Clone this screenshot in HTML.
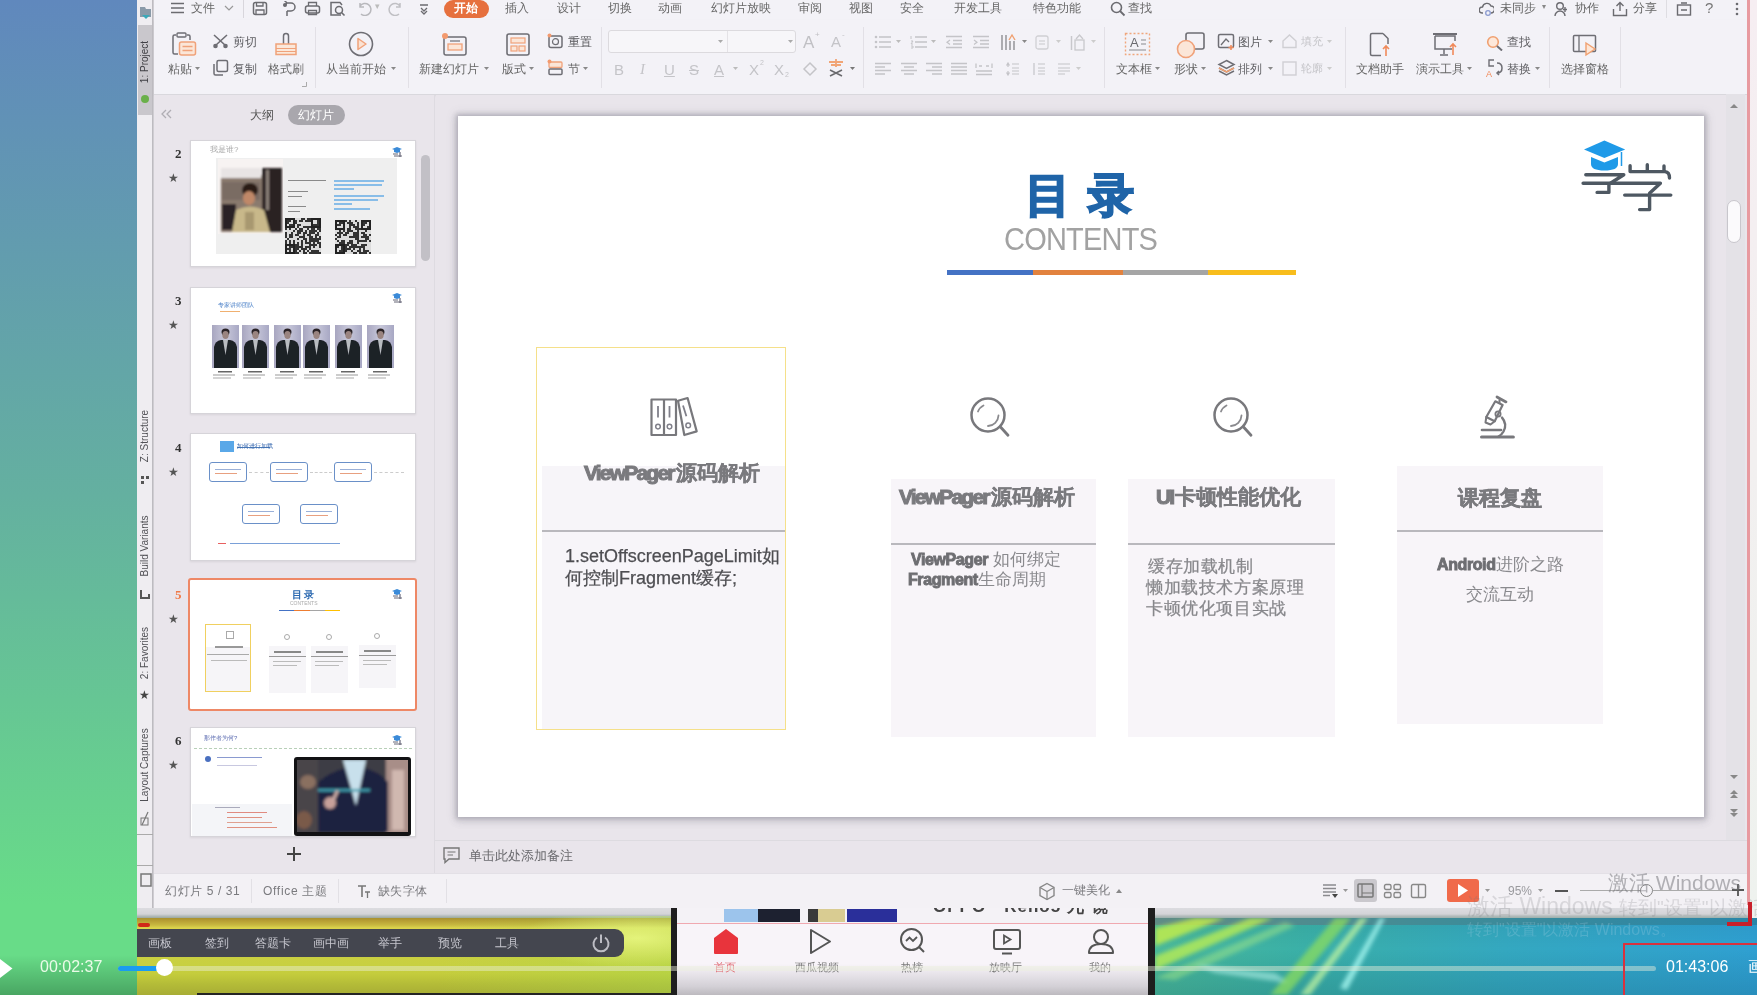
<!DOCTYPE html>
<html><head><meta charset="utf-8">
<style>
*{margin:0;padding:0;box-sizing:border-box}
html,body{width:1757px;height:995px;overflow:hidden;background:#68dc88;font-family:"Liberation Sans",sans-serif}
body{filter:blur(0.45px)}
.a{position:absolute}
#bg{left:0;top:0;width:1757px;height:995px;background:linear-gradient(#6088bd 0px,#64b0a0 495px,#68dc88 905px,#68dc88 995px)}
#as{left:137px;top:0;width:17px;height:908px;background:#eceaee;border-right:1px solid #cfcdd2}
#wps{left:154px;top:0;width:1594px;height:908px;background:#e9e5eb}
#tabs{left:0;top:0;width:1594px;height:20px;background:#f3f2f7}
#ribbon{left:0;top:20px;width:1594px;height:75px;background:#f3f2f7;border-bottom:1px solid #d9d8dd;box-shadow:0 1px 2px rgba(0,0,0,.06)}
#panel{left:0;top:95px;width:281px;height:778px;background:#e9e5eb;border-right:1px solid #dedbe1}
#main{left:282px;top:95px;width:1312px;height:778px;background:#e9e5eb}
#slide{left:458px;top:116px;width:1246px;height:701px;background:#fff;box-shadow:0 0 4px 2px rgba(80,80,95,.25),0 0 10px 3px rgba(80,80,95,.1),0 3px 8px 2px rgba(80,80,95,.1)}
#status{left:0;top:873px;width:1594px;height:35px;background:#f3f1f5;border-top:1px solid #e3e0e6}
#rline{left:1748px;top:0;width:2px;height:905px;background:#e88c90}
#vid{left:137px;top:908px;width:534px;height:87px;background:linear-gradient(90deg,#b9a622,#cdd236 40%,#d7e642 80%,#a5d23a)}
#phone{left:671px;top:908px;width:484px;height:87px;overflow:hidden;background:#f6f3f8;border-left:6px solid #1e1e1e;border-right:7px solid #1e1e1e}
#win7{left:1155px;top:908px;width:602px;height:87px;background:linear-gradient(90deg,#3fae8e,#39a8b8 50%,#2e9fd0)}
.t{position:absolute;white-space:nowrap;font-size:12px;color:#666;line-height:1}
</style></head><body>
<div id="bg" class="a"></div>
<div id="as" class="a"></div>
<div id="wps" class="a">
  <div id="tabs" class="a"></div>
  <div id="ribbon" class="a"></div>
  <div id="panel" class="a"></div>
  <div id="main" class="a"></div>
  <div id="status" class="a"></div>
</div>

<!-- tab row -->
<svg class="a" style="left:170px;top:2px" width="15" height="12" viewBox="0 0 15 12"><path d="M1 1.5H14M1 6H14M1 10.5H14" stroke="#6b6b70" stroke-width="1.5"/></svg>
<div class="t" style="left:191px;top:2px;font-size:12px;color:#666">文件</div>
<svg class="a" style="left:224px;top:4px" width="10" height="8" viewBox="0 0 10 8"><path d="M1 2L5 6L9 2" fill="none" stroke="#999" stroke-width="1.2"/></svg>
<div class="a" style="left:243px;top:0;width:1px;height:18px;background:#d8d6dc"></div>
<svg class="a" style="left:252px;top:1px" width="16" height="15" viewBox="0 0 16 15"><rect x="1.5" y="1.5" width="13" height="12" rx="2" fill="none" stroke="#6b6b70" stroke-width="1.5"/><path d="M4.5 1.5V5H11V1.5M4 13.5V9H12V13.5" fill="none" stroke="#6b6b70" stroke-width="1.3"/></svg>
<svg class="a" style="left:281px;top:1px" width="16" height="16" viewBox="0 0 16 16"><path d="M6 2H10A4 4 0 0 1 10 10H6M6 10V15M3 5L6 2L3 -1" fill="none" stroke="#6b6b70" stroke-width="1.5"/><circle cx="4" cy="4" r="2" fill="#6b6b70"/></svg>
<svg class="a" style="left:304px;top:1px" width="17" height="15" viewBox="0 0 17 15"><rect x="1.5" y="5" width="14" height="7" rx="2" fill="none" stroke="#6b6b70" stroke-width="1.5"/><path d="M4.5 5V1.5H12.5V5M4.5 9.5H12.5V13.5H4.5Z" fill="none" stroke="#6b6b70" stroke-width="1.3"/></svg>
<svg class="a" style="left:329px;top:1px" width="17" height="16" viewBox="0 0 17 16"><path d="M12 14H2V1.5H11L13 4" fill="none" stroke="#6b6b70" stroke-width="1.5"/><circle cx="10" cy="9" r="3.5" fill="none" stroke="#6b6b70" stroke-width="1.5"/><path d="M12.5 11.5L15.5 14.5" stroke="#6b6b70" stroke-width="1.6"/></svg>
<svg class="a" style="left:356px;top:2px" width="16" height="14" viewBox="0 0 16 14"><path d="M4 4A6 6 0 1 1 5 12M4 1V5H8" fill="none" stroke="#b8b8bc" stroke-width="1.5"/></svg>
<div class="t" style="left:375px;top:2px;font-size:9px;color:#bbb">▾</div>
<svg class="a" style="left:388px;top:2px" width="16" height="14" viewBox="0 0 16 14"><path d="M12 4A6 6 0 1 0 11 12M12 1V5H8" fill="none" stroke="#c0c0c4" stroke-width="1.5"/></svg>
<svg class="a" style="left:419px;top:3px" width="10" height="12" viewBox="0 0 10 12"><path d="M1 2H9M2 5L5 8L8 5M2 8L5 11L8 8" fill="none" stroke="#6b6b70" stroke-width="1.3"/></svg>
<div class="a" style="left:444px;top:0;width:45px;height:18px;border-radius:9px;background:#e6703e"></div>
<div class="t" style="left:454px;top:2px;font-size:12px;color:#fff;font-weight:bold">开始</div>
<div class="t" style="left:505px;top:2px">插入</div>
<div class="t" style="left:557px;top:2px">设计</div>
<div class="t" style="left:608px;top:2px">切换</div>
<div class="t" style="left:658px;top:2px">动画</div>
<div class="t" style="left:711px;top:2px">幻灯片放映</div>
<div class="t" style="left:798px;top:2px">审阅</div>
<div class="t" style="left:849px;top:2px">视图</div>
<div class="t" style="left:900px;top:2px">安全</div>
<div class="t" style="left:954px;top:2px">开发工具</div>
<div class="t" style="left:1033px;top:2px">特色功能</div>
<svg class="a" style="left:1110px;top:1px" width="16" height="16" viewBox="0 0 16 16"><circle cx="6.5" cy="6.5" r="5" fill="none" stroke="#6b6b70" stroke-width="1.6"/><path d="M10 10L14.5 14.5" stroke="#6b6b70" stroke-width="1.8"/></svg>
<div class="t" style="left:1128px;top:2px">查找</div>
<svg class="a" style="left:1479px;top:1px" width="15" height="16" viewBox="0 0 15 16"><path d="M4 12H3A3 3 0 0 1 3.5 6A4.5 4.5 0 0 1 12 5A3.5 3.5 0 0 1 12 12" fill="none" stroke="#6b6b70" stroke-width="1.4"/><circle cx="9" cy="12" r="2.3" fill="none" stroke="#8a9ad0" stroke-width="1.3"/></svg>
<div class="t" style="left:1500px;top:2px">未同步</div>
<div class="t" style="left:1542px;top:3px;font-size:8px;color:#888">▾</div>
<svg class="a" style="left:1554px;top:1px" width="15" height="16" viewBox="0 0 15 16"><circle cx="6" cy="5" r="3.3" fill="none" stroke="#6b6b70" stroke-width="1.4"/><path d="M1 15A5 5 0 0 1 11 15M11 6V11M9 8.5H13" fill="none" stroke="#6b6b70" stroke-width="1.4"/></svg>
<div class="t" style="left:1575px;top:2px">协作</div>
<svg class="a" style="left:1612px;top:1px" width="16" height="16" viewBox="0 0 16 16"><path d="M1.5 8V14.5H14.5V8M8 10V2M4.5 5L8 1.5L11.5 5" fill="none" stroke="#6b6b70" stroke-width="1.4"/></svg>
<div class="t" style="left:1633px;top:2px">分享</div>
<div class="a" style="left:1666px;top:0;width:1px;height:18px;background:#dedde2"></div>
<svg class="a" style="left:1676px;top:2px" width="16" height="14" viewBox="0 0 16 14"><rect x="1.5" y="3" width="13" height="10" fill="none" stroke="#6b6b70" stroke-width="1.4"/><path d="M5 1H11M5 8H11" stroke="#6b6b70" stroke-width="1.3"/></svg>
<div class="t" style="left:1705px;top:0;font-size:15px;color:#777">?</div>
<svg class="a" style="left:1735px;top:2px" width="4" height="14" viewBox="0 0 4 14"><circle cx="2" cy="2" r="1.3" fill="#6b6b70"/><circle cx="2" cy="7" r="1.3" fill="#6b6b70"/><circle cx="2" cy="12" r="1.3" fill="#6b6b70"/></svg>

<!-- ribbon -->
<svg class="a" style="left:874px;top:35px" width="18" height="14" viewBox="0 0 18 14"><circle cx="2" cy="2" r="1.3" fill="#c4c4c8"/><circle cx="2" cy="7" r="1.3" fill="#c4c4c8"/><circle cx="2" cy="12" r="1.3" fill="#c4c4c8"/><path d="M5 2H17M5 7H17M5 12H17" stroke="#c4c4c8" stroke-width="1.4"/></svg>
<svg class="a" style="left:910px;top:35px" width="18" height="14" viewBox="0 0 18 14"><path d="M1 1V4M1 6H3L1 9H3M1 11H3V13H1" fill="none" stroke="#c4c4c8" stroke-width="1"/><path d="M5 2H17M5 7H17M5 12H17" stroke="#c4c4c8" stroke-width="1.4"/></svg>
<svg class="a" style="left:945px;top:35px" width="18" height="14" viewBox="0 0 18 14"><path d="M1 1.5H17M8 5.5H17M8 9H17M1 12.5H17" stroke="#c4c4c8" stroke-width="1.4"/><path d="M5 5L2 7.2L5 9.5" fill="none" stroke="#c4c4c8" stroke-width="1.2"/></svg>
<svg class="a" style="left:972px;top:35px" width="18" height="14" viewBox="0 0 18 14"><path d="M1 1.5H17M8 5.5H17M8 9H17M1 12.5H17" stroke="#c4c4c8" stroke-width="1.4"/><path d="M2 5L5 7.2L2 9.5" fill="none" stroke="#c4c4c8" stroke-width="1.2"/></svg>
<svg class="a" style="left:874px;top:62px" width="18" height="14" viewBox="0 0 18 14"><path d="M1 1.5H17M1 5H11M1 8.5H17M1 12H11" stroke="#c4c4c8" stroke-width="1.4"/></svg>
<svg class="a" style="left:900px;top:62px" width="18" height="14" viewBox="0 0 18 14"><path d="M1 1.5H17M4 5H14M1 8.5H17M4 12H14" stroke="#c4c4c8" stroke-width="1.4"/></svg>
<svg class="a" style="left:925px;top:62px" width="18" height="14" viewBox="0 0 18 14"><path d="M1 1.5H17M7 5H17M1 8.5H17M7 12H17" stroke="#c4c4c8" stroke-width="1.4"/></svg>
<svg class="a" style="left:950px;top:62px" width="18" height="14" viewBox="0 0 18 14"><path d="M1 1.5H17M1 5H17M1 8.5H17M1 12H17" stroke="#c4c4c8" stroke-width="1.4"/></svg>
<svg class="a" style="left:975px;top:62px" width="18" height="14" viewBox="0 0 18 14"><path d="M1 1.5V6M17 1.5V6M4 4H7M11 4H14M1 9H17M1 12.5H17" stroke="#c4c4c8" stroke-width="1.3"/></svg>
<svg class="a" style="left:1006px;top:62px" width="14" height="14" viewBox="0 0 14 14"><path d="M2 1V5M0.5 3.5L2 1L3.5 3.5M2 9V13M0.5 10.5L2 13L3.5 10.5M6 2H13M6 6H13M6 9H13M6 12H13" fill="none" stroke="#c4c4c8" stroke-width="1.2"/></svg>
<svg class="a" style="left:1032px;top:62px" width="14" height="14" viewBox="0 0 14 14"><path d="M2 1V13M6 2H13M6 6H13M6 9H13M6 12H13" fill="none" stroke="#c4c4c8" stroke-width="1.2"/></svg>
<svg class="a" style="left:1057px;top:62px" width="14" height="14" viewBox="0 0 14 14"><path d="M1 2H13M1 6H13M1 9H13M1 12H8" fill="none" stroke="#c4c4c8" stroke-width="1.2"/></svg>
<svg class="a" style="left:171px;top:32px" width="27" height="24" viewBox="0 0 27 24"><path d="M5 3H3.5Q2 3 2 4.5V20.5Q2 22 3.5 22H7" fill="none" stroke="#6e6e74" stroke-width="1.5"/><path d="M16 3H17.5Q19 3 19 4.5V8" fill="none" stroke="#6e6e74" stroke-width="1.5"/><rect x="6" y="1" width="9" height="4" rx="1" fill="none" stroke="#6e6e74" stroke-width="1.4"/><rect x="8.5" y="10" width="16" height="13" rx="2" fill="#fbe6d8" stroke="#f0a27a" stroke-width="1.5"/><path d="M11.5 14.5H21.5M11.5 18.5H21.5" stroke="#f0a27a" stroke-width="1.3"/></svg>
<div class="t" style="left:168px;top:63px;font-size:12px;color:#666;">粘贴</div>
<svg class="a" style="left:195px;top:67px" width="5" height="4" viewBox="0 0 5 4"><path d="M0 0H5L2.5 3Z" fill="#888"/></svg>
<svg class="a" style="left:212px;top:34px" width="17" height="15" viewBox="0 0 17 15"><path d="M2 1L13 11M15 1L4 11" stroke="#6e6e74" stroke-width="1.6"/><circle cx="3.5" cy="12" r="2.3" fill="#6e6e74"/><circle cx="13.5" cy="12" r="2.3" fill="#6e6e74"/></svg>
<div class="t" style="left:233px;top:36px;font-size:12px;color:#5e5e62;">剪切</div>
<svg class="a" style="left:212px;top:59px" width="17" height="17" viewBox="0 0 17 17"><rect x="5" y="1.5" width="10.5" height="11" rx="1.5" fill="none" stroke="#6e6e74" stroke-width="1.5"/><path d="M2 5V14.5Q2 16 3.5 16H11" fill="none" stroke="#6e6e74" stroke-width="1.5"/></svg>
<div class="t" style="left:233px;top:63px;font-size:12px;color:#5e5e62;">复制</div>
<svg class="a" style="left:274px;top:32px" width="24" height="24" viewBox="0 0 24 24"><path d="M9.5 12V4Q9.5 1.5 12 1.5Q14.5 1.5 14.5 4V12" fill="none" stroke="#6e6e74" stroke-width="1.5"/><path d="M2 12H22V22.5H2Z" fill="#fbe8da" stroke="#f0a27a" stroke-width="1.5"/><path d="M2 16.5H22M2 19.5H22" stroke="#f0a27a" stroke-width="1.2"/></svg>
<div class="t" style="left:268px;top:63px;font-size:12px;color:#666;">格式刷</div>
<svg class="a" style="left:302px;top:82px" width="5" height="5" viewBox="0 0 5 5"><path d="M4.5 0V4.5H0" fill="none" stroke="#aaa" stroke-width="1"/></svg>
<div class="a" style="left:315px;top:27px;width:1px;height:61px;background:#e2e0e6"></div>
<svg class="a" style="left:348px;top:31px" width="26" height="26" viewBox="0 0 26 26"><circle cx="13" cy="13" r="11.5" fill="none" stroke="#6e6e74" stroke-width="1.6"/><path d="M10 7.5L18 13L10 18.5Z" fill="#fbe2d2" stroke="#f0a27a" stroke-width="1.5" stroke-linejoin="round"/></svg>
<div class="t" style="left:326px;top:63px;font-size:12px;color:#666;">从当前开始</div>
<svg class="a" style="left:391px;top:67px" width="5" height="4" viewBox="0 0 5 4"><path d="M0 0H5L2.5 3Z" fill="#888"/></svg>
<div class="a" style="left:408px;top:27px;width:1px;height:61px;background:#e2e0e6"></div>
<svg class="a" style="left:441px;top:32px" width="27" height="25" viewBox="0 0 27 25"><rect x="3" y="5" width="22" height="18" rx="2" fill="none" stroke="#6e6e74" stroke-width="1.5"/><rect x="7" y="12" width="14" height="6" fill="#fbe6d8" stroke="#f0a27a" stroke-width="1.3"/><path d="M9 9H19" stroke="#6e6e74" stroke-width="1.2"/><circle cx="4" cy="4" r="3" fill="#f39a6e"/></svg>
<div class="t" style="left:419px;top:63px;font-size:12px;color:#666;">新建幻灯片</div>
<svg class="a" style="left:484px;top:67px" width="5" height="4" viewBox="0 0 5 4"><path d="M0 0H5L2.5 3Z" fill="#888"/></svg>
<svg class="a" style="left:505px;top:32px" width="26" height="25" viewBox="0 0 26 25"><rect x="2" y="2" width="22" height="21" rx="2" fill="none" stroke="#6e6e74" stroke-width="1.6"/><rect x="6" y="6" width="14" height="5" fill="#fbe6d8" stroke="#f0a27a" stroke-width="1.2"/><rect x="6" y="14" width="6" height="5" fill="#fbe6d8" stroke="#f0a27a" stroke-width="1.2"/><rect x="14" y="14" width="6" height="5" fill="#fbe6d8" stroke="#f0a27a" stroke-width="1.2"/></svg>
<div class="t" style="left:502px;top:63px;font-size:12px;color:#666;">版式</div>
<svg class="a" style="left:529px;top:67px" width="5" height="4" viewBox="0 0 5 4"><path d="M0 0H5L2.5 3Z" fill="#888"/></svg>
<svg class="a" style="left:547px;top:33px" width="17" height="16" viewBox="0 0 17 16"><rect x="2" y="3" width="13" height="11.5" rx="2" fill="none" stroke="#6e6e74" stroke-width="1.5"/><circle cx="8.5" cy="8.7" r="3" fill="none" stroke="#6e6e74" stroke-width="1.2"/><circle cx="2.5" cy="2.5" r="2" fill="#f39a6e"/></svg>
<div class="t" style="left:568px;top:36px;font-size:12px;color:#5a5a5e;">重置</div>
<svg class="a" style="left:547px;top:59px" width="17" height="17" viewBox="0 0 17 17"><rect x="2" y="3" width="13" height="5.5" rx="1" fill="#fbe6d8" stroke="#f0a27a" stroke-width="1.3"/><rect x="2" y="10" width="13" height="5.5" rx="1" fill="none" stroke="#6e6e74" stroke-width="1.5"/><circle cx="2.5" cy="2.5" r="2" fill="#f39a6e"/></svg>
<div class="t" style="left:568px;top:63px;font-size:12px;color:#666;">节</div>
<svg class="a" style="left:583px;top:67px" width="5" height="4" viewBox="0 0 5 4"><path d="M0 0H5L2.5 3Z" fill="#888"/></svg>
<div class="a" style="left:601px;top:27px;width:1px;height:61px;background:#e2e0e6"></div>
<div class="a" style="left:608px;top:30px;width:188px;height:23px;border:1px solid #dcdade;border-radius:3px;background:#f7f6f9"></div>
<div class="a" style="left:727px;top:31px;width:1px;height:21px;background:#e4e2e6"></div>
<svg class="a" style="left:718px;top:40px" width="5" height="4" viewBox="0 0 5 4"><path d="M0 0H5L2.5 3Z" fill="#aaa"/></svg>
<svg class="a" style="left:788px;top:40px" width="5" height="4" viewBox="0 0 5 4"><path d="M0 0H5L2.5 3Z" fill="#aaa"/></svg>
<div class="t" style="left:803px;top:34px;font-size:17px;color:#c0c0c4">A</div><div class="t" style="left:815px;top:31px;font-size:8px;color:#c0c0c4">+</div>
<div class="t" style="left:831px;top:34px;font-size:15px;color:#c4c4c8">A</div><div class="t" style="left:842px;top:31px;font-size:8px;color:#c4c4c8">-</div>
<div class="t" style="left:614px;top:62px;font-size:15px;color:#c4c4c8">B</div>
<div class="t" style="left:640px;top:62px;font-size:15px;color:#c4c4c8;font-style:italic;font-family:'Liberation Serif',serif">I</div>
<div class="t" style="left:664px;top:62px;font-size:15px;color:#c4c4c8;text-decoration:underline">U</div>
<div class="t" style="left:689px;top:62px;font-size:15px;color:#c4c4c8;text-decoration:line-through">S</div>
<div class="t" style="left:714px;top:62px;font-size:15px;color:#c4c4c8;text-decoration:underline">A</div>
<svg class="a" style="left:733px;top:67px" width="5" height="4" viewBox="0 0 5 4"><path d="M0 0H5L2.5 3Z" fill="#bbb"/></svg>
<div class="t" style="left:749px;top:62px;font-size:15px;color:#c4c4c8">X</div><div class="t" style="left:760px;top:59px;font-size:7px;color:#c4c4c8">2</div>
<div class="t" style="left:774px;top:62px;font-size:15px;color:#c4c4c8">X</div><div class="t" style="left:785px;top:71px;font-size:7px;color:#c4c4c8">2</div>
<svg class="a" style="left:802px;top:60px" width="17" height="17" viewBox="0 0 17 17"><path d="M2 9L8 3L14 9L8 15Z" fill="none" stroke="#c4c4c8" stroke-width="1.5"/></svg>
<svg class="a" style="left:826px;top:58px" width="20" height="20" viewBox="0 0 20 20"><path d="M3 4H17M10 1V9M5 7L15 7" stroke="#f1a576" stroke-width="1.8"/><path d="M4 12L16 18M16 12L4 18" stroke="#6a6a6e" stroke-width="1.6"/></svg>
<svg class="a" style="left:850px;top:67px" width="5" height="4" viewBox="0 0 5 4"><path d="M0 0H5L2.5 3Z" fill="#777"/></svg>
<div class="a" style="left:863px;top:27px;width:1px;height:61px;background:#e2e0e6"></div>
<svg class="a" style="left:896px;top:40px" width="5" height="4" viewBox="0 0 5 4"><path d="M0 0H5L2.5 3Z" fill="#bbb"/></svg>
<svg class="a" style="left:931px;top:40px" width="5" height="4" viewBox="0 0 5 4"><path d="M0 0H5L2.5 3Z" fill="#bbb"/></svg>
<svg class="a" style="left:1000px;top:33px" width="18" height="18" viewBox="0 0 18 18"><path d="M2 2V17M6 2V17M10 8V17M14 8V17" stroke="#9a9a9e" stroke-width="1.6"/><path d="M9 7L12 2L15 7" fill="none" stroke="#f0a070" stroke-width="1.4"/></svg>
<svg class="a" style="left:1022px;top:40px" width="5" height="4" viewBox="0 0 5 4"><path d="M0 0H5L2.5 3Z" fill="#888"/></svg>
<svg class="a" style="left:1035px;top:35px" width="14" height="15" viewBox="0 0 14 15"><rect x="1" y="1" width="12" height="13" rx="2" fill="none" stroke="#d0d0d4" stroke-width="1.3"/><path d="M4 6H10M4 9H10" stroke="#c8c8cc" stroke-width="1.2"/></svg>
<svg class="a" style="left:1070px;top:34px" width="16" height="17" viewBox="0 0 16 17"><path d="M1.5 2V16" stroke="#c8c8cc" stroke-width="1.5"/><rect x="5" y="6" width="9" height="10" fill="none" stroke="#c8c8cc" stroke-width="1.3"/><path d="M6 5L9.5 1L13 5" fill="none" stroke="#c8c8cc" stroke-width="1.3"/></svg>
<svg class="a" style="left:1056px;top:40px" width="5" height="4" viewBox="0 0 5 4"><path d="M0 0H5L2.5 3Z" fill="#ccc"/></svg>
<svg class="a" style="left:1091px;top:40px" width="5" height="4" viewBox="0 0 5 4"><path d="M0 0H5L2.5 3Z" fill="#ccc"/></svg>
<svg class="a" style="left:1076px;top:67px" width="5" height="4" viewBox="0 0 5 4"><path d="M0 0H5L2.5 3Z" fill="#ccc"/></svg>
<div class="a" style="left:1104px;top:27px;width:1px;height:61px;background:#e2e0e6"></div>
<svg class="a" style="left:1124px;top:32px" width="27" height="24" viewBox="0 0 27 24"><rect x="1.5" y="1.5" width="24" height="21" fill="none" stroke="#f0a67c" stroke-width="1.4" stroke-dasharray="2 2"/><text x="6" y="15" font-size="13" font-family="Liberation Sans" fill="#6a6a6e">A</text><path d="M5 18H22M17 8H22M17 12H22" stroke="#8a8a8e" stroke-width="1.2"/></svg>
<div class="t" style="left:1116px;top:63px;font-size:12px;color:#666;">文本框</div>
<svg class="a" style="left:1155px;top:67px" width="5" height="4" viewBox="0 0 5 4"><path d="M0 0H5L2.5 3Z" fill="#888"/></svg>
<svg class="a" style="left:1176px;top:31px" width="30" height="28" viewBox="0 0 30 28"><rect x="10" y="2" width="18" height="16" rx="2" fill="none" stroke="#6e6e74" stroke-width="1.6"/><circle cx="10" cy="18" r="8.5" fill="#fbe6d8" stroke="#f0a27a" stroke-width="1.6"/></svg>
<div class="t" style="left:1174px;top:63px;font-size:12px;color:#666;">形状</div>
<svg class="a" style="left:1201px;top:67px" width="5" height="4" viewBox="0 0 5 4"><path d="M0 0H5L2.5 3Z" fill="#888"/></svg>
<svg class="a" style="left:1217px;top:33px" width="19" height="17" viewBox="0 0 19 17"><rect x="1.5" y="1.5" width="15" height="13" rx="1.5" fill="none" stroke="#6e6e74" stroke-width="1.5"/><path d="M4 12L9 6L12 9" fill="none" stroke="#6e6e74" stroke-width="1.3"/><path d="M14 12V17M11.5 14.5H16.5" stroke="#f08a5a" stroke-width="1.5"/></svg>
<div class="t" style="left:1238px;top:36px;font-size:12px;color:#5e5e62;">图片</div>
<svg class="a" style="left:1268px;top:40px" width="5" height="4" viewBox="0 0 5 4"><path d="M0 0H5L2.5 3Z" fill="#888"/></svg>
<svg class="a" style="left:1217px;top:59px" width="19" height="17" viewBox="0 0 19 17"><path d="M9.5 1.5L17 5.5L9.5 9.5L2 5.5Z" fill="none" stroke="#6e6e74" stroke-width="1.5"/><path d="M2 9L9.5 13L17 9M2 12L9.5 16L17 12" fill="none" stroke="#6e6e74" stroke-width="1.5"/><path d="M2 9L9.5 13L17 9" fill="none" stroke="#f0a070" stroke-width="1.5"/></svg>
<div class="t" style="left:1238px;top:63px;font-size:12px;color:#5e5e62;">排列</div>
<svg class="a" style="left:1268px;top:67px" width="5" height="4" viewBox="0 0 5 4"><path d="M0 0H5L2.5 3Z" fill="#888"/></svg>
<svg class="a" style="left:1281px;top:33px" width="17" height="17" viewBox="0 0 17 17"><path d="M2 8L8.5 2L15 8V14.5H2Z" fill="none" stroke="#cfcfd3" stroke-width="1.4"/></svg>
<svg class="a" style="left:1281px;top:60px" width="17" height="17" viewBox="0 0 17 17"><rect x="2" y="2" width="13" height="13" fill="none" stroke="#cfcfd3" stroke-width="1.4"/></svg>
<div class="t" style="left:1301px;top:36px;font-size:11px;color:#c4c4c8;">填充</div>
<svg class="a" style="left:1327px;top:40px" width="5" height="4" viewBox="0 0 5 4"><path d="M0 0H5L2.5 3Z" fill="#ccc"/></svg>
<div class="t" style="left:1301px;top:63px;font-size:11px;color:#c4c4c8;">轮廓</div>
<svg class="a" style="left:1327px;top:67px" width="5" height="4" viewBox="0 0 5 4"><path d="M0 0H5L2.5 3Z" fill="#ccc"/></svg>
<div class="a" style="left:1345px;top:27px;width:1px;height:61px;background:#e2e0e6"></div>
<svg class="a" style="left:1369px;top:32px" width="24" height="25" viewBox="0 0 24 25"><path d="M14 1.5H3Q1.5 1.5 1.5 3V22Q1.5 23.5 3 23.5H12M14 1.5L19 6.5V12" fill="none" stroke="#6e6e74" stroke-width="1.5"/><path d="M17 24V14M14 17L17 14L20 17" fill="none" stroke="#f08a5a" stroke-width="1.6"/></svg>
<div class="t" style="left:1356px;top:63px;font-size:12px;color:#666;">文档助手</div>
<svg class="a" style="left:1432px;top:32px" width="26" height="25" viewBox="0 0 26 25"><path d="M1 2H25" stroke="#6e6e74" stroke-width="2"/><path d="M3 4V17H20" fill="none" stroke="#6e6e74" stroke-width="1.5"/><path d="M12 17V22M8 23H16" stroke="#6e6e74" stroke-width="1.5"/><path d="M3 4H23V9" fill="none" stroke="#6e6e74" stroke-width="1.5"/><path d="M21 23V12M18 15L21 12L24 15" fill="none" stroke="#f08a5a" stroke-width="1.6"/></svg>
<div class="t" style="left:1416px;top:63px;font-size:12px;color:#666;">演示工具</div>
<svg class="a" style="left:1467px;top:67px" width="5" height="4" viewBox="0 0 5 4"><path d="M0 0H5L2.5 3Z" fill="#888"/></svg>
<svg class="a" style="left:1486px;top:35px" width="18" height="16" viewBox="0 0 18 16"><circle cx="7" cy="7" r="5.3" fill="#fde8da" stroke="#f0a070" stroke-width="1.6"/><path d="M11 11L16 15.5" stroke="#6e6e74" stroke-width="2"/></svg>
<div class="t" style="left:1507px;top:36px;font-size:12px;color:#5e5e62;">查找</div>
<svg class="a" style="left:1486px;top:59px" width="18" height="19" viewBox="0 0 18 19"><path d="M8 1H3V7H8" fill="none" stroke="#6e6e74" stroke-width="1.4"/><path d="M11 4Q16 4 16 9Q16 14 11 14M13 12L11 14L13 16" fill="none" stroke="#6e6e74" stroke-width="1.5"/><text x="0" y="18" font-size="9" fill="#f08a5a" font-family="Liberation Sans">A</text></svg>
<div class="t" style="left:1507px;top:63px;font-size:12px;color:#5e5e62;">替换</div>
<svg class="a" style="left:1535px;top:67px" width="5" height="4" viewBox="0 0 5 4"><path d="M0 0H5L2.5 3Z" fill="#888"/></svg>
<div class="a" style="left:1549px;top:27px;width:1px;height:61px;background:#e2e0e6"></div>
<svg class="a" style="left:1572px;top:34px" width="26" height="23" viewBox="0 0 26 23"><rect x="1.5" y="1.5" width="22" height="16" rx="1" fill="none" stroke="#6e6e74" stroke-width="1.5"/><path d="M7 1.5V17.5" stroke="#6e6e74" stroke-width="1.3"/><path d="M14 9L23 15L14 21Z" fill="#fde6d6" stroke="#f0a070" stroke-width="1.4"/></svg>
<div class="t" style="left:1561px;top:63px;font-size:12px;color:#666;">选择窗格</div>
<div class="a" style="left:1620px;top:27px;width:1px;height:61px;background:#e2e0e6"></div>

<!-- AS strip -->
<div class="a" style="left:137px;top:0;width:16px;height:908px;background:#efedf1;border-right:1px solid #bdbbc0"></div>
<div class="a" style="left:138px;top:25px;width:14px;height:90px;background:#c9c7cc"></div>
<svg class="a" style="left:139px;top:5px" width="13" height="16" viewBox="0 0 13 16"><path d="M1 2H6L7 4H12V12H1Z" fill="#8a9aa8"/><path d="M3 10L7 14L11 10Z" fill="#3aa8b8"/></svg>
<div class="a" style="left:141px;top:95px;width:8px;height:8px;border-radius:50%;background:#6ab04a"></div>
<div class="a" style="left:145px;top:62px;width:0;height:0"><div class="t" style="left:0;top:0;font-size:10px;color:#404045;transform:translate(-50%,-50%) rotate(-90deg)">1: Project</div></div>
<div class="a" style="left:145px;top:436px;width:0;height:0"><div class="t" style="left:0;top:0;font-size:10px;color:#505055;transform:translate(-50%,-50%) rotate(-90deg)">Z: Structure</div></div>
<svg class="a" style="left:140px;top:475px" width="10" height="10" viewBox="0 0 10 10"><rect x="1" y="1" width="3" height="3" fill="#555"/><rect x="6" y="1" width="3" height="3" fill="#555"/><rect x="1" y="6" width="3" height="3" fill="#555"/></svg>
<div class="a" style="left:145px;top:546px;width:0;height:0"><div class="t" style="left:0;top:0;font-size:10px;color:#505055;transform:translate(-50%,-50%) rotate(-90deg)">Build Variants</div></div>
<svg class="a" style="left:140px;top:589px" width="10" height="10" viewBox="0 0 10 10"><path d="M1 1V9H9V5" fill="none" stroke="#555" stroke-width="2"/></svg>
<div class="a" style="left:145px;top:653px;width:0;height:0"><div class="t" style="left:0;top:0;font-size:10px;color:#505055;transform:translate(-50%,-50%) rotate(-90deg)">2: Favorites</div></div>
<div class="t" style="left:139px;top:689px;font-size:12px;color:#444">★</div>
<div class="a" style="left:145px;top:765px;width:0;height:0"><div class="t" style="left:0;top:0;font-size:10px;color:#505055;transform:translate(-50%,-50%) rotate(-90deg)">Layout Captures</div></div>
<svg class="a" style="left:140px;top:810px" width="10" height="16" viewBox="0 0 10 16"><path d="M2 15L8 2" stroke="#777" stroke-width="1.2"/><rect x="1" y="8" width="7" height="7" fill="none" stroke="#777" stroke-width="1"/></svg>
<div class="a" style="left:137px;top:834px;width:16px;height:1px;background:#aaa"></div>
<div class="a" style="left:137px;top:865px;width:16px;height:1px;background:#aaa"></div>
<svg class="a" style="left:140px;top:872px" width="12" height="16" viewBox="0 0 12 16"><rect x="1" y="2" width="10" height="12" fill="none" stroke="#777" stroke-width="1.5"/></svg>
<!-- panel -->
<svg class="a" style="left:161px;top:109px" width="11" height="10" viewBox="0 0 11 10"><path d="M5 1L1 5L5 9M10 1L6 5L10 9" fill="none" stroke="#b0aeb4" stroke-width="1.3"/></svg>
<div class="t" style="left:250px;top:109px;color:#555">大纲</div>
<div class="a" style="left:288px;top:105px;width:57px;height:20px;border-radius:10px;background:#a9a7ad"></div>
<div class="t" style="left:298px;top:109px;color:#fff">幻灯片</div>
<div class="a" style="left:421px;top:155px;width:9px;height:106px;border-radius:5px;background:#c2c0c6"></div>
<div class="t" style="left:175px;top:147px;font-size:13px;font-weight:bold;color:#333;font-family:'Liberation Serif',serif">2</div>
<div class="t" style="left:168px;top:172px;font-size:12px;color:#555">★</div>
<div class="a" style="left:190px;top:140px;width:226px;height:127px;background:#fff;border:1px solid #d6d4d9;box-shadow:0 1px 2px rgba(0,0,0,.08)"></div>
<div class="a" style="left:216px;top:158px;width:181px;height:96px;background:#efefef"></div>
<div class="t" style="left:210px;top:146px;font-size:8px;color:#aaa">我是谁?</div>
<svg class="a" style="left:218px;top:159px" width="65" height="75" viewBox="218 159 65 75"><defs><filter id="pb"><feGaussianBlur stdDeviation="1.2"/></filter></defs>
<rect x="218" y="159" width="65" height="75" fill="#f7f3f2"/>
<g filter="url(#pb)">
<rect x="221" y="175" width="61" height="57" fill="#8a7a6e"/>
<rect x="221" y="168" width="40" height="10" fill="#e8e4e4"/>
<rect x="262" y="168" width="20" height="64" fill="#2a2220"/>
<rect x="266" y="170" width="3" height="40" fill="#8a8078"/>
<rect x="222" y="204" width="14" height="26" fill="#2a2428"/>
<rect x="222" y="182" width="38" height="18" fill="#7a6c64"/>
<ellipse cx="250" cy="190" rx="8" ry="7" fill="#2a1e18"/>
<ellipse cx="249" cy="198" rx="6" ry="7" fill="#c08868"/>
<path d="M232 232L236 210Q250 203 264 210L270 232Z" fill="#c8b88a"/>
<rect x="245" y="212" width="9" height="18" fill="#a89870"/>
</g></svg>
<div class="a" style="left:288px;top:180px;width:38px;height:1px;background:#8a8a8a"></div>
<div class="a" style="left:288px;top:191px;width:20px;height:1px;background:#8a8a8a"></div>
<div class="a" style="left:288px;top:196px;width:14px;height:1px;background:#8a8a8a"></div>
<div class="a" style="left:288px;top:206px;width:18px;height:1px;background:#8a8a8a"></div>
<div class="a" style="left:288px;top:211px;width:12px;height:1px;background:#8a8a8a"></div>
<div class="a" style="left:334px;top:180px;width:50px;height:1.5px;background:#88bde8"></div>
<div class="a" style="left:334px;top:184px;width:48px;height:1.5px;background:#88bde8"></div>
<div class="a" style="left:334px;top:188px;width:20px;height:1.5px;background:#88bde8"></div>
<div class="a" style="left:334px;top:195px;width:50px;height:1.5px;background:#88bde8"></div>
<div class="a" style="left:334px;top:199px;width:44px;height:1.5px;background:#88bde8"></div>
<div class="a" style="left:334px;top:203px;width:18px;height:1.5px;background:#88bde8"></div>
<div class="a" style="left:334px;top:208px;width:36px;height:1.5px;background:#88bde8"></div>
<svg class="a" style="left:285px;top:218px" width="36" height="36" viewBox="0 0 36 36"><rect width="36" height="36" fill="#dcdcdc"/><rect x="0" y="0" width="2" height="2" fill="#333"/><rect x="0" y="2" width="2" height="2" fill="#333"/><rect x="0" y="4" width="2" height="2" fill="#333"/><rect x="0" y="6" width="2" height="2" fill="#333"/><rect x="0" y="10" width="2" height="2" fill="#333"/><rect x="0" y="14" width="2" height="2" fill="#333"/><rect x="0" y="16" width="2" height="2" fill="#333"/><rect x="0" y="18" width="2" height="2" fill="#333"/><rect x="0" y="22" width="2" height="2" fill="#333"/><rect x="0" y="24" width="2" height="2" fill="#333"/><rect x="0" y="26" width="2" height="2" fill="#333"/><rect x="0" y="28" width="2" height="2" fill="#333"/><rect x="0" y="30" width="2" height="2" fill="#333"/><rect x="0" y="32" width="2" height="2" fill="#333"/><rect x="0" y="34" width="2" height="2" fill="#333"/><rect x="2" y="0" width="2" height="2" fill="#333"/><rect x="2" y="2" width="2" height="2" fill="#333"/><rect x="2" y="4" width="2" height="2" fill="#333"/><rect x="2" y="8" width="2" height="2" fill="#333"/><rect x="2" y="20" width="2" height="2" fill="#333"/><rect x="2" y="26" width="2" height="2" fill="#333"/><rect x="2" y="30" width="2" height="2" fill="#333"/><rect x="4" y="0" width="2" height="2" fill="#333"/><rect x="4" y="2" width="2" height="2" fill="#333"/><rect x="4" y="6" width="2" height="2" fill="#333"/><rect x="4" y="10" width="2" height="2" fill="#333"/><rect x="4" y="16" width="2" height="2" fill="#333"/><rect x="4" y="18" width="2" height="2" fill="#333"/><rect x="4" y="22" width="2" height="2" fill="#333"/><rect x="4" y="24" width="2" height="2" fill="#333"/><rect x="4" y="26" width="2" height="2" fill="#333"/><rect x="4" y="28" width="2" height="2" fill="#333"/><rect x="4" y="30" width="2" height="2" fill="#333"/><rect x="4" y="32" width="2" height="2" fill="#333"/><rect x="4" y="34" width="2" height="2" fill="#333"/><rect x="6" y="0" width="2" height="2" fill="#333"/><rect x="6" y="6" width="2" height="2" fill="#333"/><rect x="6" y="8" width="2" height="2" fill="#333"/><rect x="6" y="14" width="2" height="2" fill="#333"/><rect x="6" y="16" width="2" height="2" fill="#333"/><rect x="6" y="18" width="2" height="2" fill="#333"/><rect x="6" y="28" width="2" height="2" fill="#333"/><rect x="6" y="34" width="2" height="2" fill="#333"/><rect x="8" y="2" width="2" height="2" fill="#333"/><rect x="8" y="4" width="2" height="2" fill="#333"/><rect x="8" y="12" width="2" height="2" fill="#333"/><rect x="8" y="22" width="2" height="2" fill="#333"/><rect x="8" y="24" width="2" height="2" fill="#333"/><rect x="8" y="30" width="2" height="2" fill="#333"/><rect x="8" y="32" width="2" height="2" fill="#333"/><rect x="10" y="2" width="2" height="2" fill="#333"/><rect x="10" y="4" width="2" height="2" fill="#333"/><rect x="10" y="10" width="2" height="2" fill="#333"/><rect x="10" y="16" width="2" height="2" fill="#333"/><rect x="10" y="26" width="2" height="2" fill="#333"/><rect x="10" y="28" width="2" height="2" fill="#333"/><rect x="10" y="30" width="2" height="2" fill="#333"/><rect x="10" y="32" width="2" height="2" fill="#333"/><rect x="10" y="34" width="2" height="2" fill="#333"/><rect x="12" y="6" width="2" height="2" fill="#333"/><rect x="12" y="8" width="2" height="2" fill="#333"/><rect x="12" y="12" width="2" height="2" fill="#333"/><rect x="12" y="14" width="2" height="2" fill="#333"/><rect x="12" y="16" width="2" height="2" fill="#333"/><rect x="12" y="20" width="2" height="2" fill="#333"/><rect x="12" y="24" width="2" height="2" fill="#333"/><rect x="12" y="26" width="2" height="2" fill="#333"/><rect x="12" y="28" width="2" height="2" fill="#333"/><rect x="12" y="30" width="2" height="2" fill="#333"/><rect x="12" y="34" width="2" height="2" fill="#333"/><rect x="14" y="2" width="2" height="2" fill="#333"/><rect x="14" y="6" width="2" height="2" fill="#333"/><rect x="14" y="10" width="2" height="2" fill="#333"/><rect x="14" y="12" width="2" height="2" fill="#333"/><rect x="14" y="14" width="2" height="2" fill="#333"/><rect x="14" y="18" width="2" height="2" fill="#333"/><rect x="14" y="28" width="2" height="2" fill="#333"/><rect x="14" y="32" width="2" height="2" fill="#333"/><rect x="16" y="0" width="2" height="2" fill="#333"/><rect x="16" y="2" width="2" height="2" fill="#333"/><rect x="16" y="10" width="2" height="2" fill="#333"/><rect x="16" y="12" width="2" height="2" fill="#333"/><rect x="16" y="18" width="2" height="2" fill="#333"/><rect x="16" y="22" width="2" height="2" fill="#333"/><rect x="16" y="24" width="2" height="2" fill="#333"/><rect x="16" y="26" width="2" height="2" fill="#333"/><rect x="16" y="28" width="2" height="2" fill="#333"/><rect x="16" y="30" width="2" height="2" fill="#333"/><rect x="18" y="0" width="2" height="2" fill="#333"/><rect x="18" y="8" width="2" height="2" fill="#333"/><rect x="18" y="14" width="2" height="2" fill="#333"/><rect x="18" y="16" width="2" height="2" fill="#333"/><rect x="18" y="18" width="2" height="2" fill="#333"/><rect x="18" y="20" width="2" height="2" fill="#333"/><rect x="18" y="30" width="2" height="2" fill="#333"/><rect x="18" y="32" width="2" height="2" fill="#333"/><rect x="18" y="34" width="2" height="2" fill="#333"/><rect x="20" y="2" width="2" height="2" fill="#333"/><rect x="20" y="8" width="2" height="2" fill="#333"/><rect x="20" y="12" width="2" height="2" fill="#333"/><rect x="20" y="14" width="2" height="2" fill="#333"/><rect x="20" y="20" width="2" height="2" fill="#333"/><rect x="20" y="22" width="2" height="2" fill="#333"/><rect x="20" y="24" width="2" height="2" fill="#333"/><rect x="20" y="28" width="2" height="2" fill="#333"/><rect x="20" y="30" width="2" height="2" fill="#333"/><rect x="20" y="34" width="2" height="2" fill="#333"/><rect x="22" y="0" width="2" height="2" fill="#333"/><rect x="22" y="2" width="2" height="2" fill="#333"/><rect x="22" y="8" width="2" height="2" fill="#333"/><rect x="22" y="10" width="2" height="2" fill="#333"/><rect x="22" y="16" width="2" height="2" fill="#333"/><rect x="22" y="24" width="2" height="2" fill="#333"/><rect x="22" y="28" width="2" height="2" fill="#333"/><rect x="22" y="32" width="2" height="2" fill="#333"/><rect x="24" y="0" width="2" height="2" fill="#333"/><rect x="24" y="2" width="2" height="2" fill="#333"/><rect x="24" y="8" width="2" height="2" fill="#333"/><rect x="24" y="12" width="2" height="2" fill="#333"/><rect x="24" y="14" width="2" height="2" fill="#333"/><rect x="24" y="16" width="2" height="2" fill="#333"/><rect x="24" y="18" width="2" height="2" fill="#333"/><rect x="24" y="20" width="2" height="2" fill="#333"/><rect x="24" y="22" width="2" height="2" fill="#333"/><rect x="24" y="24" width="2" height="2" fill="#333"/><rect x="24" y="26" width="2" height="2" fill="#333"/><rect x="24" y="28" width="2" height="2" fill="#333"/><rect x="24" y="30" width="2" height="2" fill="#333"/><rect x="24" y="34" width="2" height="2" fill="#333"/><rect x="26" y="0" width="2" height="2" fill="#333"/><rect x="26" y="2" width="2" height="2" fill="#333"/><rect x="26" y="6" width="2" height="2" fill="#333"/><rect x="26" y="8" width="2" height="2" fill="#333"/><rect x="26" y="10" width="2" height="2" fill="#333"/><rect x="26" y="12" width="2" height="2" fill="#333"/><rect x="26" y="14" width="2" height="2" fill="#333"/><rect x="26" y="18" width="2" height="2" fill="#333"/><rect x="26" y="20" width="2" height="2" fill="#333"/><rect x="26" y="22" width="2" height="2" fill="#333"/><rect x="26" y="26" width="2" height="2" fill="#333"/><rect x="26" y="32" width="2" height="2" fill="#333"/><rect x="26" y="34" width="2" height="2" fill="#333"/><rect x="28" y="6" width="2" height="2" fill="#333"/><rect x="28" y="10" width="2" height="2" fill="#333"/><rect x="28" y="12" width="2" height="2" fill="#333"/><rect x="28" y="14" width="2" height="2" fill="#333"/><rect x="28" y="20" width="2" height="2" fill="#333"/><rect x="28" y="22" width="2" height="2" fill="#333"/><rect x="28" y="24" width="2" height="2" fill="#333"/><rect x="28" y="26" width="2" height="2" fill="#333"/><rect x="28" y="28" width="2" height="2" fill="#333"/><rect x="28" y="32" width="2" height="2" fill="#333"/><rect x="28" y="34" width="2" height="2" fill="#333"/><rect x="30" y="6" width="2" height="2" fill="#333"/><rect x="30" y="8" width="2" height="2" fill="#333"/><rect x="30" y="12" width="2" height="2" fill="#333"/><rect x="30" y="16" width="2" height="2" fill="#333"/><rect x="30" y="18" width="2" height="2" fill="#333"/><rect x="30" y="20" width="2" height="2" fill="#333"/><rect x="30" y="22" width="2" height="2" fill="#333"/><rect x="30" y="26" width="2" height="2" fill="#333"/><rect x="30" y="32" width="2" height="2" fill="#333"/><rect x="30" y="34" width="2" height="2" fill="#333"/><rect x="32" y="0" width="2" height="2" fill="#333"/><rect x="32" y="2" width="2" height="2" fill="#333"/><rect x="32" y="4" width="2" height="2" fill="#333"/><rect x="32" y="6" width="2" height="2" fill="#333"/><rect x="32" y="10" width="2" height="2" fill="#333"/><rect x="32" y="14" width="2" height="2" fill="#333"/><rect x="32" y="16" width="2" height="2" fill="#333"/><rect x="32" y="20" width="2" height="2" fill="#333"/><rect x="32" y="22" width="2" height="2" fill="#333"/><rect x="32" y="24" width="2" height="2" fill="#333"/><rect x="32" y="32" width="2" height="2" fill="#333"/><rect x="32" y="34" width="2" height="2" fill="#333"/><rect x="34" y="2" width="2" height="2" fill="#333"/><rect x="34" y="6" width="2" height="2" fill="#333"/><rect x="34" y="10" width="2" height="2" fill="#333"/><rect x="34" y="12" width="2" height="2" fill="#333"/><rect x="34" y="18" width="2" height="2" fill="#333"/><rect x="34" y="20" width="2" height="2" fill="#333"/><rect x="34" y="24" width="2" height="2" fill="#333"/><rect x="34" y="26" width="2" height="2" fill="#333"/><rect x="34" y="28" width="2" height="2" fill="#333"/><rect x="34" y="34" width="2" height="2" fill="#333"/><rect x="1" y="1" width="8" height="8" fill="none" stroke="#222" stroke-width="2"/><rect x="27" y="1" width="8" height="8" fill="none" stroke="#222" stroke-width="2"/><rect x="1" y="27" width="8" height="8" fill="none" stroke="#222" stroke-width="2"/></svg>
<svg class="a" style="left:335px;top:220px" width="36" height="34" viewBox="0 0 36 34"><rect width="36" height="34" fill="#dcdcdc"/><rect x="0" y="0" width="2" height="2" fill="#333"/><rect x="0" y="2" width="2" height="2" fill="#333"/><rect x="0" y="4" width="2" height="2" fill="#333"/><rect x="0" y="6" width="2" height="2" fill="#333"/><rect x="0" y="14" width="2" height="2" fill="#333"/><rect x="0" y="18" width="2" height="2" fill="#333"/><rect x="0" y="28" width="2" height="2" fill="#333"/><rect x="0" y="30" width="2" height="2" fill="#333"/><rect x="0" y="32" width="2" height="2" fill="#333"/><rect x="2" y="0" width="2" height="2" fill="#333"/><rect x="2" y="4" width="2" height="2" fill="#333"/><rect x="2" y="8" width="2" height="2" fill="#333"/><rect x="2" y="12" width="2" height="2" fill="#333"/><rect x="2" y="16" width="2" height="2" fill="#333"/><rect x="2" y="20" width="2" height="2" fill="#333"/><rect x="2" y="24" width="2" height="2" fill="#333"/><rect x="2" y="26" width="2" height="2" fill="#333"/><rect x="2" y="32" width="2" height="2" fill="#333"/><rect x="4" y="0" width="2" height="2" fill="#333"/><rect x="4" y="2" width="2" height="2" fill="#333"/><rect x="4" y="4" width="2" height="2" fill="#333"/><rect x="4" y="8" width="2" height="2" fill="#333"/><rect x="4" y="10" width="2" height="2" fill="#333"/><rect x="4" y="12" width="2" height="2" fill="#333"/><rect x="4" y="14" width="2" height="2" fill="#333"/><rect x="4" y="16" width="2" height="2" fill="#333"/><rect x="4" y="22" width="2" height="2" fill="#333"/><rect x="4" y="30" width="2" height="2" fill="#333"/><rect x="4" y="32" width="2" height="2" fill="#333"/><rect x="6" y="2" width="2" height="2" fill="#333"/><rect x="6" y="8" width="2" height="2" fill="#333"/><rect x="6" y="12" width="2" height="2" fill="#333"/><rect x="6" y="20" width="2" height="2" fill="#333"/><rect x="6" y="22" width="2" height="2" fill="#333"/><rect x="6" y="26" width="2" height="2" fill="#333"/><rect x="6" y="28" width="2" height="2" fill="#333"/><rect x="6" y="30" width="2" height="2" fill="#333"/><rect x="8" y="2" width="2" height="2" fill="#333"/><rect x="8" y="6" width="2" height="2" fill="#333"/><rect x="8" y="10" width="2" height="2" fill="#333"/><rect x="8" y="14" width="2" height="2" fill="#333"/><rect x="8" y="20" width="2" height="2" fill="#333"/><rect x="8" y="22" width="2" height="2" fill="#333"/><rect x="8" y="24" width="2" height="2" fill="#333"/><rect x="8" y="28" width="2" height="2" fill="#333"/><rect x="10" y="0" width="2" height="2" fill="#333"/><rect x="10" y="12" width="2" height="2" fill="#333"/><rect x="10" y="14" width="2" height="2" fill="#333"/><rect x="10" y="24" width="2" height="2" fill="#333"/><rect x="10" y="26" width="2" height="2" fill="#333"/><rect x="10" y="28" width="2" height="2" fill="#333"/><rect x="10" y="30" width="2" height="2" fill="#333"/><rect x="12" y="2" width="2" height="2" fill="#333"/><rect x="12" y="8" width="2" height="2" fill="#333"/><rect x="12" y="10" width="2" height="2" fill="#333"/><rect x="12" y="12" width="2" height="2" fill="#333"/><rect x="12" y="22" width="2" height="2" fill="#333"/><rect x="12" y="24" width="2" height="2" fill="#333"/><rect x="12" y="28" width="2" height="2" fill="#333"/><rect x="14" y="0" width="2" height="2" fill="#333"/><rect x="14" y="2" width="2" height="2" fill="#333"/><rect x="14" y="4" width="2" height="2" fill="#333"/><rect x="14" y="6" width="2" height="2" fill="#333"/><rect x="14" y="8" width="2" height="2" fill="#333"/><rect x="14" y="10" width="2" height="2" fill="#333"/><rect x="14" y="16" width="2" height="2" fill="#333"/><rect x="14" y="20" width="2" height="2" fill="#333"/><rect x="14" y="22" width="2" height="2" fill="#333"/><rect x="14" y="26" width="2" height="2" fill="#333"/><rect x="14" y="28" width="2" height="2" fill="#333"/><rect x="16" y="2" width="2" height="2" fill="#333"/><rect x="16" y="4" width="2" height="2" fill="#333"/><rect x="16" y="10" width="2" height="2" fill="#333"/><rect x="16" y="16" width="2" height="2" fill="#333"/><rect x="16" y="20" width="2" height="2" fill="#333"/><rect x="16" y="22" width="2" height="2" fill="#333"/><rect x="16" y="24" width="2" height="2" fill="#333"/><rect x="16" y="26" width="2" height="2" fill="#333"/><rect x="16" y="30" width="2" height="2" fill="#333"/><rect x="18" y="4" width="2" height="2" fill="#333"/><rect x="18" y="6" width="2" height="2" fill="#333"/><rect x="18" y="12" width="2" height="2" fill="#333"/><rect x="18" y="14" width="2" height="2" fill="#333"/><rect x="18" y="16" width="2" height="2" fill="#333"/><rect x="18" y="24" width="2" height="2" fill="#333"/><rect x="18" y="26" width="2" height="2" fill="#333"/><rect x="18" y="28" width="2" height="2" fill="#333"/><rect x="18" y="32" width="2" height="2" fill="#333"/><rect x="20" y="0" width="2" height="2" fill="#333"/><rect x="20" y="6" width="2" height="2" fill="#333"/><rect x="20" y="8" width="2" height="2" fill="#333"/><rect x="20" y="12" width="2" height="2" fill="#333"/><rect x="20" y="14" width="2" height="2" fill="#333"/><rect x="20" y="16" width="2" height="2" fill="#333"/><rect x="20" y="18" width="2" height="2" fill="#333"/><rect x="20" y="24" width="2" height="2" fill="#333"/><rect x="20" y="26" width="2" height="2" fill="#333"/><rect x="20" y="32" width="2" height="2" fill="#333"/><rect x="22" y="2" width="2" height="2" fill="#333"/><rect x="22" y="4" width="2" height="2" fill="#333"/><rect x="22" y="6" width="2" height="2" fill="#333"/><rect x="22" y="8" width="2" height="2" fill="#333"/><rect x="22" y="10" width="2" height="2" fill="#333"/><rect x="22" y="12" width="2" height="2" fill="#333"/><rect x="22" y="14" width="2" height="2" fill="#333"/><rect x="22" y="16" width="2" height="2" fill="#333"/><rect x="22" y="18" width="2" height="2" fill="#333"/><rect x="22" y="20" width="2" height="2" fill="#333"/><rect x="22" y="22" width="2" height="2" fill="#333"/><rect x="22" y="26" width="2" height="2" fill="#333"/><rect x="22" y="30" width="2" height="2" fill="#333"/><rect x="24" y="8" width="2" height="2" fill="#333"/><rect x="24" y="20" width="2" height="2" fill="#333"/><rect x="24" y="26" width="2" height="2" fill="#333"/><rect x="24" y="28" width="2" height="2" fill="#333"/><rect x="24" y="30" width="2" height="2" fill="#333"/><rect x="24" y="32" width="2" height="2" fill="#333"/><rect x="26" y="12" width="2" height="2" fill="#333"/><rect x="26" y="16" width="2" height="2" fill="#333"/><rect x="26" y="20" width="2" height="2" fill="#333"/><rect x="26" y="24" width="2" height="2" fill="#333"/><rect x="26" y="26" width="2" height="2" fill="#333"/><rect x="26" y="32" width="2" height="2" fill="#333"/><rect x="28" y="2" width="2" height="2" fill="#333"/><rect x="28" y="4" width="2" height="2" fill="#333"/><rect x="28" y="12" width="2" height="2" fill="#333"/><rect x="28" y="14" width="2" height="2" fill="#333"/><rect x="28" y="16" width="2" height="2" fill="#333"/><rect x="28" y="20" width="2" height="2" fill="#333"/><rect x="28" y="24" width="2" height="2" fill="#333"/><rect x="28" y="26" width="2" height="2" fill="#333"/><rect x="28" y="28" width="2" height="2" fill="#333"/><rect x="28" y="30" width="2" height="2" fill="#333"/><rect x="28" y="32" width="2" height="2" fill="#333"/><rect x="30" y="2" width="2" height="2" fill="#333"/><rect x="30" y="8" width="2" height="2" fill="#333"/><rect x="30" y="10" width="2" height="2" fill="#333"/><rect x="30" y="14" width="2" height="2" fill="#333"/><rect x="30" y="16" width="2" height="2" fill="#333"/><rect x="30" y="18" width="2" height="2" fill="#333"/><rect x="30" y="20" width="2" height="2" fill="#333"/><rect x="30" y="24" width="2" height="2" fill="#333"/><rect x="30" y="30" width="2" height="2" fill="#333"/><rect x="30" y="32" width="2" height="2" fill="#333"/><rect x="32" y="6" width="2" height="2" fill="#333"/><rect x="32" y="8" width="2" height="2" fill="#333"/><rect x="32" y="16" width="2" height="2" fill="#333"/><rect x="32" y="18" width="2" height="2" fill="#333"/><rect x="32" y="30" width="2" height="2" fill="#333"/><rect x="34" y="0" width="2" height="2" fill="#333"/><rect x="34" y="4" width="2" height="2" fill="#333"/><rect x="34" y="6" width="2" height="2" fill="#333"/><rect x="34" y="8" width="2" height="2" fill="#333"/><rect x="34" y="14" width="2" height="2" fill="#333"/><rect x="34" y="20" width="2" height="2" fill="#333"/><rect x="34" y="32" width="2" height="2" fill="#333"/><rect x="1" y="1" width="8" height="8" fill="none" stroke="#222" stroke-width="2"/><rect x="27" y="1" width="8" height="8" fill="none" stroke="#222" stroke-width="2"/><rect x="1" y="25" width="8" height="8" fill="none" stroke="#222" stroke-width="2"/></svg>
<svg class="a" style="left:391px;top:146px" width="14" height="12" viewBox="0 0 14 12"><path d="M1 3L6 1L11 3L6 5Z" fill="#3a8ad8"/><path d="M3 4V6L6 7L9 6V4" fill="#3a8ad8"/><path d="M2 8H7M3 10H11M9 6V11" stroke="#667" stroke-width="1.2"/></svg>
<div class="t" style="left:175px;top:294px;font-size:13px;font-weight:bold;color:#333;font-family:'Liberation Serif',serif">3</div>
<div class="t" style="left:168px;top:319px;font-size:12px;color:#555">★</div>
<div class="a" style="left:190px;top:287px;width:226px;height:127px;background:#fff;border:1px solid #d6d4d9;box-shadow:0 1px 2px rgba(0,0,0,.08)"></div>
<div class="t" style="left:218px;top:302px;font-size:6px;color:#4a80c8">专家讲师团队</div>
<div class="a" style="left:220px;top:311px;width:20px;height:1px;background:#f0b070"></div>
<svg class="a" style="left:391px;top:292px" width="14" height="12" viewBox="0 0 14 12"><path d="M1 3L6 1L11 3L6 5Z" fill="#3a8ad8"/><path d="M3 4V6L6 7L9 6V4" fill="#3a8ad8"/><path d="M2 8H7M3 10H11M9 6V11" stroke="#667" stroke-width="1.2"/></svg>
<svg class="a" style="left:212px;top:325px" width="27" height="62" viewBox="0 0 27 62"><defs><linearGradient id="pg212" x1="0" x2="1"><stop offset="0" stop-color="#a8a6c0"/><stop offset=".5" stop-color="#c8c8da"/><stop offset="1" stop-color="#a8a8c4"/></linearGradient><filter id="pf212"><feGaussianBlur stdDeviation="0.5"/></filter></defs>
<rect x="0" y="0" width="27" height="43" fill="url(#pg212)"/>
<g filter="url(#pf212)"><ellipse cx="13.5" cy="7" rx="4" ry="3.5" fill="#2a2428"/><ellipse cx="13.5" cy="10" rx="3.2" ry="4" fill="#9a8480"/>
<path d="M2 43V22Q3 16 9 15H18Q24 16 25 22V43Z" fill="#1e2028"/><path d="M11 15H16L13.5 30Z" fill="#b8bcc0"/></g>
<rect x="6" y="46" width="14" height="1.5" fill="#666"/><rect x="1" y="49.5" width="22" height="1" fill="#999"/><rect x="1" y="52.5" width="18" height="1" fill="#aaa"/></svg>
<svg class="a" style="left:242px;top:325px" width="27" height="62" viewBox="0 0 27 62"><defs><linearGradient id="pg242" x1="0" x2="1"><stop offset="0" stop-color="#a8a6c0"/><stop offset=".5" stop-color="#c8c8da"/><stop offset="1" stop-color="#a8a8c4"/></linearGradient><filter id="pf242"><feGaussianBlur stdDeviation="0.5"/></filter></defs>
<rect x="0" y="0" width="27" height="43" fill="url(#pg242)"/>
<g filter="url(#pf242)"><ellipse cx="13.5" cy="7" rx="4" ry="3.5" fill="#2a2428"/><ellipse cx="13.5" cy="10" rx="3.2" ry="4" fill="#9a8480"/>
<path d="M2 43V22Q3 16 9 15H18Q24 16 25 22V43Z" fill="#1e2028"/><path d="M11 15H16L13.5 30Z" fill="#b8bcc0"/></g>
<rect x="6" y="46" width="14" height="1.5" fill="#666"/><rect x="1" y="49.5" width="22" height="1" fill="#999"/><rect x="1" y="52.5" width="18" height="1" fill="#aaa"/></svg>
<svg class="a" style="left:274px;top:325px" width="27" height="62" viewBox="0 0 27 62"><defs><linearGradient id="pg274" x1="0" x2="1"><stop offset="0" stop-color="#a8a6c0"/><stop offset=".5" stop-color="#c8c8da"/><stop offset="1" stop-color="#a8a8c4"/></linearGradient><filter id="pf274"><feGaussianBlur stdDeviation="0.5"/></filter></defs>
<rect x="0" y="0" width="27" height="43" fill="url(#pg274)"/>
<g filter="url(#pf274)"><ellipse cx="13.5" cy="7" rx="4" ry="3.5" fill="#2a2428"/><ellipse cx="13.5" cy="10" rx="3.2" ry="4" fill="#9a8480"/>
<path d="M2 43V22Q3 16 9 15H18Q24 16 25 22V43Z" fill="#1e2028"/><path d="M11 15H16L13.5 30Z" fill="#b8bcc0"/></g>
<rect x="6" y="46" width="14" height="1.5" fill="#666"/><rect x="1" y="49.5" width="22" height="1" fill="#999"/><rect x="1" y="52.5" width="18" height="1" fill="#aaa"/></svg>
<svg class="a" style="left:303px;top:325px" width="27" height="62" viewBox="0 0 27 62"><defs><linearGradient id="pg303" x1="0" x2="1"><stop offset="0" stop-color="#a8a6c0"/><stop offset=".5" stop-color="#c8c8da"/><stop offset="1" stop-color="#a8a8c4"/></linearGradient><filter id="pf303"><feGaussianBlur stdDeviation="0.5"/></filter></defs>
<rect x="0" y="0" width="27" height="43" fill="url(#pg303)"/>
<g filter="url(#pf303)"><ellipse cx="13.5" cy="7" rx="4" ry="3.5" fill="#2a2428"/><ellipse cx="13.5" cy="10" rx="3.2" ry="4" fill="#9a8480"/>
<path d="M2 43V22Q3 16 9 15H18Q24 16 25 22V43Z" fill="#1e2028"/><path d="M11 15H16L13.5 30Z" fill="#b8bcc0"/></g>
<rect x="6" y="46" width="14" height="1.5" fill="#666"/><rect x="1" y="49.5" width="22" height="1" fill="#999"/><rect x="1" y="52.5" width="18" height="1" fill="#aaa"/></svg>
<svg class="a" style="left:335px;top:325px" width="27" height="62" viewBox="0 0 27 62"><defs><linearGradient id="pg335" x1="0" x2="1"><stop offset="0" stop-color="#a8a6c0"/><stop offset=".5" stop-color="#c8c8da"/><stop offset="1" stop-color="#a8a8c4"/></linearGradient><filter id="pf335"><feGaussianBlur stdDeviation="0.5"/></filter></defs>
<rect x="0" y="0" width="27" height="43" fill="url(#pg335)"/>
<g filter="url(#pf335)"><ellipse cx="13.5" cy="7" rx="4" ry="3.5" fill="#2a2428"/><ellipse cx="13.5" cy="10" rx="3.2" ry="4" fill="#9a8480"/>
<path d="M2 43V22Q3 16 9 15H18Q24 16 25 22V43Z" fill="#1e2028"/><path d="M11 15H16L13.5 30Z" fill="#b8bcc0"/></g>
<rect x="6" y="46" width="14" height="1.5" fill="#666"/><rect x="1" y="49.5" width="22" height="1" fill="#999"/><rect x="1" y="52.5" width="18" height="1" fill="#aaa"/></svg>
<svg class="a" style="left:367px;top:325px" width="27" height="62" viewBox="0 0 27 62"><defs><linearGradient id="pg367" x1="0" x2="1"><stop offset="0" stop-color="#a8a6c0"/><stop offset=".5" stop-color="#c8c8da"/><stop offset="1" stop-color="#a8a8c4"/></linearGradient><filter id="pf367"><feGaussianBlur stdDeviation="0.5"/></filter></defs>
<rect x="0" y="0" width="27" height="43" fill="url(#pg367)"/>
<g filter="url(#pf367)"><ellipse cx="13.5" cy="7" rx="4" ry="3.5" fill="#2a2428"/><ellipse cx="13.5" cy="10" rx="3.2" ry="4" fill="#9a8480"/>
<path d="M2 43V22Q3 16 9 15H18Q24 16 25 22V43Z" fill="#1e2028"/><path d="M11 15H16L13.5 30Z" fill="#b8bcc0"/></g>
<rect x="6" y="46" width="14" height="1.5" fill="#666"/><rect x="1" y="49.5" width="22" height="1" fill="#999"/><rect x="1" y="52.5" width="18" height="1" fill="#aaa"/></svg>
<div class="t" style="left:175px;top:441px;font-size:13px;font-weight:bold;color:#333;font-family:'Liberation Serif',serif">4</div>
<div class="t" style="left:168px;top:466px;font-size:12px;color:#555">★</div>
<div class="a" style="left:190px;top:433px;width:226px;height:128px;background:#fff;border:1px solid #d6d4d9;box-shadow:0 1px 2px rgba(0,0,0,.08)"></div>
<div class="a" style="left:220px;top:441px;width:14px;height:11px;background:#5aa8e8"></div>
<div class="a" style="left:237px;top:447px;width:33px;height:1px;background:#4a7ab8"></div>
<div class="t" style="left:237px;top:443px;font-size:6px;color:#3a6ab0">如何进行加载</div>
<div class="a" style="left:209px;top:462px;width:38px;height:20px;border:1.5px solid #6a90c8;border-radius:3px"></div>
<div class="a" style="left:215px;top:469px;width:26px;height:1px;background:#9ab0d8"></div>
<div class="a" style="left:215px;top:473px;width:22px;height:1px;background:#e8a080"></div>
<div class="a" style="left:270px;top:462px;width:38px;height:20px;border:1.5px solid #6a90c8;border-radius:3px"></div>
<div class="a" style="left:276px;top:469px;width:26px;height:1px;background:#9ab0d8"></div>
<div class="a" style="left:276px;top:473px;width:22px;height:1px;background:#e8a080"></div>
<div class="a" style="left:334px;top:462px;width:38px;height:20px;border:1.5px solid #6a90c8;border-radius:3px"></div>
<div class="a" style="left:340px;top:469px;width:26px;height:1px;background:#9ab0d8"></div>
<div class="a" style="left:340px;top:473px;width:22px;height:1px;background:#e8a080"></div>
<div class="a" style="left:242px;top:504px;width:38px;height:20px;border:1.5px solid #6a90c8;border-radius:3px"></div>
<div class="a" style="left:248px;top:511px;width:26px;height:1px;background:#9ab0d8"></div>
<div class="a" style="left:248px;top:515px;width:22px;height:1px;background:#e8a080"></div>
<div class="a" style="left:300px;top:504px;width:38px;height:20px;border:1.5px solid #6a90c8;border-radius:3px"></div>
<div class="a" style="left:306px;top:511px;width:26px;height:1px;background:#9ab0d8"></div>
<div class="a" style="left:306px;top:515px;width:22px;height:1px;background:#e8a080"></div>
<div class="a" style="left:249px;top:472px;width:20px;height:0;border-top:1px dashed #ccc"></div><div class="a" style="left:310px;top:472px;width:22px;height:0;border-top:1px dashed #ccc"></div><div class="a" style="left:374px;top:472px;width:30px;height:0;border-top:1px dashed #ccc"></div>
<div class="a" style="left:218px;top:543px;width:8px;height:1px;background:#e86060"></div><div class="a" style="left:230px;top:543px;width:110px;height:1px;background:#7aa0d8"></div>
<div class="t" style="left:175px;top:588px;font-size:13px;font-weight:bold;color:#f07a48;font-family:'Liberation Serif',serif">5</div>
<div class="t" style="left:168px;top:613px;font-size:12px;color:#555">★</div>
<div class="a" style="left:188px;top:578px;width:229px;height:133px;background:#fff;border:2px solid #ee8866;border-radius:3px"></div>
<div class="t" style="left:292px;top:590px;font-size:10px;font-weight:bold;color:#2a68b0;letter-spacing:2px">目录</div>
<div class="t" style="left:290px;top:601px;font-size:5px;color:#aaa">CONTENTS</div>
<div class="a" style="left:279px;top:610px;width:61px;height:1px;background:linear-gradient(90deg,#4472c4 25%,#ed7d31 25%,#ed7d31 50%,#a5a5a5 50%,#a5a5a5 75%,#ffc000 75%)"></div>
<svg class="a" style="left:391px;top:588px" width="14" height="12" viewBox="0 0 14 12"><path d="M1 3L6 1L11 3L6 5Z" fill="#3a8ad8"/><path d="M3 4V6L6 7L9 6V4" fill="#3a8ad8"/><path d="M2 8H7M3 10H11M9 6V11" stroke="#667" stroke-width="1.2"/></svg>
<div class="a" style="left:205px;top:624px;width:46px;height:68px;border:1px solid #f0d060;background:linear-gradient(#fff 0,#fff 34%,#f6f5f8 34%)"></div>
<div class="a" style="left:226px;top:631px;width:8px;height:8px;border:1px solid #aaa"></div>
<div class="a" style="left:215px;top:646px;width:28px;height:2px;background:#999"></div><div class="a" style="left:207px;top:654px;width:42px;height:1px;background:#aaa"></div><div class="a" style="left:211px;top:660px;width:36px;height:1px;background:#bbb"></div>
<div class="a" style="left:269px;top:646px;width:37px;height:47px;background:#f6f5f8"></div>
<div class="a" style="left:274px;top:651px;width:27px;height:2px;background:#888"></div>
<div class="a" style="left:269px;top:656px;width:37px;height:1px;background:#999"></div>
<div class="a" style="left:273px;top:661px;width:28px;height:1px;background:#bbb"></div>
<div class="a" style="left:273px;top:665px;width:24px;height:1px;background:#bbb"></div>
<div class="a" style="left:284px;top:634px;width:6px;height:6px;border-radius:50%;border:1px solid #aaa"></div>
<div class="a" style="left:311px;top:646px;width:37px;height:47px;background:#f6f5f8"></div>
<div class="a" style="left:316px;top:651px;width:27px;height:2px;background:#888"></div>
<div class="a" style="left:311px;top:656px;width:37px;height:1px;background:#999"></div>
<div class="a" style="left:315px;top:661px;width:28px;height:1px;background:#bbb"></div>
<div class="a" style="left:315px;top:665px;width:24px;height:1px;background:#bbb"></div>
<div class="a" style="left:326px;top:634px;width:6px;height:6px;border-radius:50%;border:1px solid #aaa"></div>
<div class="a" style="left:359px;top:645px;width:37px;height:43px;background:#f6f5f8"></div>
<div class="a" style="left:364px;top:650px;width:27px;height:2px;background:#888"></div>
<div class="a" style="left:359px;top:655px;width:37px;height:1px;background:#999"></div>
<div class="a" style="left:363px;top:660px;width:28px;height:1px;background:#bbb"></div>
<div class="a" style="left:363px;top:664px;width:24px;height:1px;background:#bbb"></div>
<div class="a" style="left:374px;top:633px;width:6px;height:6px;border-radius:50%;border:1px solid #aaa"></div>
<div class="t" style="left:175px;top:734px;font-size:13px;font-weight:bold;color:#333;font-family:'Liberation Serif',serif">6</div>
<div class="t" style="left:168px;top:759px;font-size:12px;color:#555">★</div>
<div class="a" style="left:190px;top:727px;width:226px;height:110px;background:#fff;border:1px solid #d6d4d9;box-shadow:0 1px 2px rgba(0,0,0,.08)"></div>
<div class="t" style="left:204px;top:735px;font-size:6px;color:#5a6ab0">那作者为何?</div>
<svg class="a" style="left:391px;top:734px" width="14" height="12" viewBox="0 0 14 12"><path d="M1 3L6 1L11 3L6 5Z" fill="#3a8ad8"/><path d="M3 4V6L6 7L9 6V4" fill="#3a8ad8"/><path d="M2 8H7M3 10H11M9 6V11" stroke="#667" stroke-width="1.2"/></svg>
<div class="a" style="left:194px;top:748px;width:218px;height:0;border-top:1px dashed #b8d0b8"></div>
<div class="a" style="left:205px;top:756px;width:6px;height:6px;border-radius:50%;background:#4a70c0"></div><div class="a" style="left:217px;top:757px;width:45px;height:1px;background:#8a9ad0"></div><div class="a" style="left:217px;top:765px;width:40px;height:1px;background:#c8c8e0"></div>
<div class="a" style="left:192px;top:804px;width:100px;height:32px;background:#f4f5f8"></div>
<div class="a" style="left:215px;top:807px;width:25px;height:1px;background:#aab"></div>
<div class="a" style="left:227px;top:812px;width:40px;height:1px;background:#e08a80"></div>
<div class="a" style="left:227px;top:817px;width:35px;height:1px;background:#e09080"></div>
<div class="a" style="left:227px;top:822px;width:45px;height:1px;background:#e0a090"></div>
<div class="a" style="left:227px;top:827px;width:50px;height:1px;background:#e09080"></div>
<svg class="a" style="left:294px;top:757px" width="117" height="79" viewBox="294 757 117 79"><defs><filter id="pb6"><feGaussianBlur stdDeviation="1.6"/></filter><clipPath id="c6"><rect x="297" y="760" width="111" height="72"/></clipPath></defs>
<rect x="294" y="757" width="117" height="79" rx="3" fill="#121214"/>
<g clip-path="url(#c6)"><g filter="url(#pb6)">
<rect x="290" y="755" width="125" height="85" fill="#3e3c44"/>
<rect x="290" y="755" width="28" height="85" fill="#4a4448"/>
<ellipse cx="308" cy="782" rx="8" ry="7" fill="#8a7060"/><ellipse cx="304" cy="820" rx="8" ry="9" fill="#7a5a48"/>
<rect x="386" y="755" width="30" height="85" fill="#a88e88"/>
<rect x="392" y="770" width="12" height="60" fill="#d0b8b0"/>
<path d="M318 832V782Q330 772 345 768H365Q380 772 388 782V832Z" fill="#1a2040"/>
<path d="M343 760H366L356 806Z" fill="#c8e0ec"/>
<rect x="318" y="789" width="52" height="2.5" fill="#40a0b0"/>
<ellipse cx="330" cy="803" rx="6" ry="6" fill="#c8a09a"/>
<rect x="334" y="790" width="3" height="10" fill="#d0b0a8" transform="rotate(25 335 795)"/>
</g></g></svg>

<svg class="a" style="left:286px;top:846px" width="16" height="16" viewBox="0 0 16 16"><path d="M8 1V15M1 8H15" stroke="#444" stroke-width="2"/></svg>

<div id="slide" class="a"></div>
<!-- slide content -->
<div class="t" style="left:1025px;top:172px;font-size:46px;font-weight:bold;color:#1f64a8;letter-spacing:17px;-webkit-text-stroke:2px #1f64a8">目录</div>
<div class="t" style="left:1004px;top:224px;font-size:29px;color:#a2a2a2;letter-spacing:-0.8px;transform:scaleY(1.08);transform-origin:0 0">CONTENTS</div>
<div class="a" style="left:947px;top:270px;width:86px;height:5px;background:#4472c4"></div>
<div class="a" style="left:1033px;top:270px;width:90px;height:5px;background:#e2823e"></div>
<div class="a" style="left:1123px;top:270px;width:85px;height:5px;background:#a5a5a5"></div>
<div class="a" style="left:1208px;top:270px;width:88px;height:5px;background:#f8bd1c"></div>
<svg class="a" style="left:1570px;top:130px" width="120" height="90" viewBox="0 0 120 90">
<path d="M14 19.4L34.4 10.4L55.2 19.4L34.4 28Z" fill="#1f9ae8"/>
<path d="M21 27V34Q21 40.5 34.4 40.5Q48 40.5 48 34V27L34.4 32.5Z" fill="#1f9ae8"/>
<path d="M51.5 22V36" stroke="#1f9ae8" stroke-width="1.5"/>
<g fill="none" stroke="#4e5862" stroke-width="3.4" stroke-linecap="round" stroke-linejoin="round">
<path d="M15.8 44.8H53.8L38.9 54.2V62.4H27.1"/>
<path d="M13.1 53.3H90.4L79.6 63.3V79.6H69.6"/>
<path d="M54.7 65.1H100.8"/>
<path d="M60.1 35.7V41.6H95Q99.5 42 99.5 48"/>
<path d="M77.3 34.8V41M94 36V41"/>
</g></svg>
<div class="a" style="left:536px;top:347px;width:250px;height:383px;border:1.5px solid #f5e08a;background:#fff"></div>
<div class="a" style="left:542px;top:466px;width:243px;height:263px;background:#f7f5f9"></div>
<div class="a" style="left:542px;top:530px;width:243px;height:2px;background:#b9b8bd"></div>
<svg class="a" style="left:640px;top:390px" width="64" height="52" viewBox="640 390 64 52">
<g fill="none" stroke="#78787c" stroke-width="2.2" stroke-linejoin="round">
<rect x="651.5" y="399.5" width="24.5" height="35.5"/>
<path d="M664 399.5V435"/>
<path d="M678 400.7L687.6 398L696.7 431.4L684.3 435Z"/>
</g>
<g stroke="#80808a" stroke-width="1.8"><path d="M658 406V417.5M669.5 406V417.5M683 405.5L686.4 416.3"/></g>
<g fill="none" stroke="#80808a" stroke-width="1.5"><circle cx="658" cy="426.6" r="2.3"/><circle cx="669.5" cy="426.6" r="2.3"/><circle cx="688.2" cy="425.4" r="2.3"/></g>
</svg>
<div class="t" style="left:584px;top:462px;font-size:21px;font-weight:bold;color:#7a7a7e;-webkit-text-stroke:0.3px #7a7a7e"><span style="letter-spacing:-1.8px;-webkit-text-stroke:1.1px #7a7a7e;margin-right:2px">ViewPager</span>源码解析</div>
<div class="t" style="left:565px;top:546px;font-size:18px;color:#4e4e52;line-height:21.5px;-webkit-text-stroke:0.25px #4e4e52">1.setOffscreenPageLimit如<br>何控制Fragment缓存;</div>
<div class="a" style="left:891px;top:479px;width:205px;height:258px;background:#f8f5f9"></div>
<div class="a" style="left:891px;top:543px;width:205px;height:2px;background:#b9b8bd"></div>
<svg class="a" style="left:963px;top:390px" width="50" height="50" viewBox="-25 -25 50 50">
<circle cx="0" cy="0" r="16.5" fill="none" stroke="#78787c" stroke-width="2.5"/>
<path d="M12.5 12L20 20.2" stroke="#78787c" stroke-width="2.8" stroke-linecap="round"/>
<path d="M-10 -3.5A11 11 0 0 1 -4.5 -9.5" fill="none" stroke="#8a8a8e" stroke-width="1.8" stroke-linecap="round"/>
<path d="M10.5 0.5A11 11 0 0 1 0 11" fill="none" stroke="#8a8a8e" stroke-width="1.8" stroke-linecap="round"/>
</svg>
<div class="t" style="left:899px;top:486px;font-size:21px;font-weight:bold;color:#7a7a7e;-webkit-text-stroke:0.3px #7a7a7e"><span style="letter-spacing:-1.8px;-webkit-text-stroke:1.1px #7a7a7e;margin-right:2px">ViewPager</span>源码解析</div>
<div class="t" style="left:911px;top:550px;font-size:17px;color:#8a8a8e;line-height:20px"><b style="color:#6e6e72;font-size:16px;letter-spacing:-0.4px;-webkit-text-stroke:0.9px #6e6e72">ViewPager</b> 如何绑定<br><b style="color:#6e6e72;font-size:16px;letter-spacing:-0.4px;-webkit-text-stroke:0.9px #6e6e72;margin-left:-3px">Fragment</b>生命周期</div>
<div class="a" style="left:1128px;top:479px;width:207px;height:258px;background:#f8f5f9"></div>
<div class="a" style="left:1128px;top:543px;width:207px;height:2px;background:#b9b8bd"></div>
<svg class="a" style="left:1206px;top:390px" width="50" height="50" viewBox="-25 -25 50 50">
<circle cx="0" cy="0" r="16.5" fill="none" stroke="#78787c" stroke-width="2.5"/>
<path d="M12.5 12L20 20.2" stroke="#78787c" stroke-width="2.8" stroke-linecap="round"/>
<path d="M-10 -3.5A11 11 0 0 1 -4.5 -9.5" fill="none" stroke="#8a8a8e" stroke-width="1.8" stroke-linecap="round"/>
<path d="M10.5 0.5A11 11 0 0 1 0 11" fill="none" stroke="#8a8a8e" stroke-width="1.8" stroke-linecap="round"/>
</svg>
<div class="t" style="left:1156px;top:486px;font-size:21px;font-weight:bold;color:#7a7a7e;-webkit-text-stroke:0.3px #7a7a7e"><span style="letter-spacing:-1.8px;-webkit-text-stroke:1.1px #7a7a7e;margin-right:2px">UI</span>卡顿性能优化</div>
<div class="t" style="left:1146px;top:556px;font-size:17px;color:#88888c;line-height:21px;letter-spacing:0.6px;-webkit-text-stroke:0.25px #88888c"><span style="margin-left:2px">缓存加载机制</span><br>懒加载技术方案原理<br>卡顿优化项目实战</div>
<div class="a" style="left:1397px;top:466px;width:206px;height:258px;background:#f8f5f9"></div>
<div class="a" style="left:1397px;top:530px;width:206px;height:2px;background:#b9b8bd"></div>
<svg class="a" style="left:1470px;top:390px" width="50" height="52" viewBox="1470 390 50 52">
<g fill="none" stroke="#78787c" stroke-linejoin="round" stroke-linecap="round">
<path d="M1481.5 436.9H1513.4" stroke-width="3"/>
<path d="M1482 430H1501" stroke-width="2.6"/>
<path d="M1502 417.6Q1507.5 424 1503.5 431.5Q1501.5 435 1498.5 436.5" stroke-width="2.4"/>
<path d="M1486.3 417L1495.3 401.3L1502.6 404.9L1494.7 421.2Z" stroke-width="2.2"/>
<path d="M1486.3 417L1485.5 422.5L1490.5 424.5L1494.7 421.2" stroke-width="2"/>
<path d="M1497 397L1506 401.9" stroke-width="2.8"/>
<path d="M1499.5 400V403" stroke-width="2"/>
<circle cx="1498" cy="414" r="2.6" stroke-width="1.8"/>
</g>
</svg>
<div class="t" style="left:1458px;top:487px;font-size:21px;font-weight:bold;color:#7a7a7e;-webkit-text-stroke:0.5px #7a7a7e">课程复盘</div>
<div class="t" style="left:1437px;top:556px;font-size:17px;color:#8a8a8e"><b style="color:#6e6e72;font-size:16px;letter-spacing:-0.4px;-webkit-text-stroke:0.9px #6e6e72">Android</b>进阶之路</div>
<div class="t" style="left:1466px;top:586px;font-size:17px;color:#8a8a8e">交流互动</div>


<div id="vid" class="a">
  <div class="a" style="left:0;top:0;width:535px;height:10px;background:linear-gradient(#dcdce0 0,#d4d4d8 6px,#b4bcbc 8px,#9ca8a0 10px)"></div>
  <div class="a" style="left:0;top:10px;width:535px;height:77px;background:linear-gradient(#a89030 0px,#b8a034 3px,#c8b840 7px,#dcd44c 10px,#d0cc44 16px,#c8d040 46px,#c4cc3c 56px,#b4bc38 66px,#a4a834 80px)"></div>
  <div class="a" style="left:300px;top:8px;width:235px;height:79px;background:radial-gradient(ellipse 120px 30px at 200px 22px,rgba(240,255,140,.75),rgba(200,240,100,0)),linear-gradient(90deg,rgba(160,220,80,0),rgba(160,220,80,.35))"></div>
  <div class="a" style="left:60px;top:85px;width:475px;height:2px;background:#242424"></div>
  <div class="a" style="left:1px;top:15px;width:12px;height:4px;background:#d02818;border-radius:2px"></div>
  <div class="a" style="left:0;top:21px;width:487px;height:28px;background:#44464f;border-radius:0 9px 9px 0"></div>
  <div class="t" style="left:11px;top:29px;color:#c6c6ce">画板</div>
  <div class="t" style="left:68px;top:29px;color:#c6c6ce">签到</div>
  <div class="t" style="left:118px;top:29px;color:#c6c6ce">答题卡</div>
  <div class="t" style="left:176px;top:29px;color:#c6c6ce">画中画</div>
  <div class="t" style="left:241px;top:29px;color:#c6c6ce">举手</div>
  <div class="t" style="left:301px;top:29px;color:#c6c6ce">预览</div>
  <div class="t" style="left:358px;top:29px;color:#c6c6ce">工具</div>
  <svg class="a" style="left:454px;top:25px" width="20" height="20" viewBox="0 0 20 20"><path d="M6 4.5A7.5 7.5 0 1 0 14 4.5" fill="none" stroke="#bdbdc4" stroke-width="2"/><path d="M10 1.5V10" stroke="#bdbdc4" stroke-width="2"/></svg>
</div>
<div id="phone" class="a">
<div class="a" style="left:0;top:0;width:471px;height:87px;background:#f6f3f8"><div class="a" style="left:3px;top:0;width:468px;height:87px">
  <div class="a" style="left:-3px;top:0;width:471px;height:15px;background:#f4f2f6"></div>
  <div class="a" style="left:44px;top:1px;width:34px;height:13px;background:#9cc4ec"></div>
  <div class="a" style="left:78px;top:1px;width:42px;height:13px;background:#1d2130"></div>
  <div class="a" style="left:128px;top:1px;width:10px;height:13px;background:#3a3a3a"></div>
  <div class="a" style="left:138px;top:1px;width:27px;height:13px;background:#d9cc92"></div>
  <div class="a" style="left:167px;top:1px;width:50px;height:13px;background:#2a2f9a"></div>
  <div class="t" style="left:253px;top:-10px;font-size:17px;color:#444;font-weight:bold;letter-spacing:1px">OPPO · Reno5 九 镜</div>
  <div class="a" style="left:-3px;top:15px;width:471px;height:1px;background:#f0a8b0"></div>
  <div class="a" style="left:-3px;top:16px;width:471px;height:71px;background:linear-gradient(#f8f4f9 0px,#f8f4f9 40px,#ebe7ed 48px,#d4d1d7 62px,#bdbabf 71px)"></div>
  <svg class="a" style="left:33px;top:20px" width="26" height="27" viewBox="0 0 26 27"><path d="M13 1 L25 10 V25 Q25 26 24 26 H2 Q1 26 1 25 V10 Z" fill="#e8343c"/></svg>
  <div class="t" style="left:34px;top:54px;color:#e06a72;font-size:11px">首页</div>
  <svg class="a" style="left:128px;top:20px" width="26" height="27" viewBox="0 0 26 27"><path d="M3 2 L22 13.5 L3 25 Z" fill="none" stroke="#555" stroke-width="2" stroke-linejoin="round"/></svg>
  <div class="t" style="left:115px;top:54px;color:#777;font-size:11px">西瓜视频</div>
  <svg class="a" style="left:219px;top:19px" width="28" height="28" viewBox="0 0 28 28"><circle cx="12.5" cy="12.5" r="10.5" fill="none" stroke="#555" stroke-width="2"/><path d="M20 20 L25 25" stroke="#555" stroke-width="2"/><path d="M7 14 L10.5 10.5 L14 14 L18 10" fill="none" stroke="#555" stroke-width="1.8"/></svg>
  <div class="t" style="left:221px;top:54px;color:#777;font-size:11px">热榜</div>
  <svg class="a" style="left:312px;top:20px" width="30" height="28" viewBox="0 0 30 28"><rect x="2" y="2" width="26" height="19" rx="2" fill="none" stroke="#555" stroke-width="2"/><path d="M12 7.5 L18.5 11.5 L12 15.5 Z" fill="none" stroke="#555" stroke-width="1.8"/><path d="M10 25.5H20" stroke="#555" stroke-width="2"/></svg>
  <div class="t" style="left:309px;top:54px;color:#777;font-size:11px">放映厅</div>
  <svg class="a" style="left:407px;top:20px" width="28" height="28" viewBox="0 0 28 28"><circle cx="14" cy="9" r="7" fill="none" stroke="#555" stroke-width="2"/><path d="M2 25 Q2 16 14 16 Q26 16 26 25 Z" fill="none" stroke="#555" stroke-width="2" stroke-linejoin="round"/></svg>
  <div class="t" style="left:409px;top:54px;color:#777;font-size:11px">我的</div>
</div></div>
</div>
<div id="win7" class="a">
  <div class="a" style="left:0;top:0;width:602px;height:10px;background:linear-gradient(#dcdce0 0,#d4d4d8 6px,#b4bcbc 8px,#9cb0ac 10px)"></div>
  <div class="a" style="left:0;top:10px;width:602px;height:77px;background:linear-gradient(90deg,#48b89a 0px,#3ab0a8 150px,#34a8c0 350px,#2fa0d2 602px)"></div>
  <div class="a" style="left:0;top:10px;width:602px;height:77px;background:linear-gradient(rgba(0,0,0,.05),rgba(255,255,255,0) 40%,rgba(0,40,60,.15))"></div>
  <svg class="a" style="left:0;top:10px" width="602" height="77" viewBox="0 0 602 77"><defs><filter id="bl" x="-20%" y="-20%" width="140%" height="140%"><feGaussianBlur stdDeviation="2"/></filter></defs>
<defs><linearGradient id="tb" x1="0" x2="1"><stop offset="0" stop-color="#5f8c86"/><stop offset=".5" stop-color="#3f8c98"/><stop offset="1" stop-color="#2a86a8"/></linearGradient></defs><rect x="0" y="0" width="602" height="7" fill="url(#tb)"/>
<g filter="url(#bl)">
<path d="M0 10 L40 0 L70 0 L0 28Z" fill="#c8f048" opacity=".8"/>
<path d="M0 38 L95 0 L118 0 L0 52Z" fill="#c0f050" opacity=".75"/>
<path d="M0 60 L130 4 L140 8 L20 62Z" fill="#a0e888" opacity=".5"/>
<path d="M40 47 L120 55 L135 65 L60 55Z" fill="#b0f0e8" opacity=".6"/>
<path d="M115 77 L180 0 L196 0 L132 77Z" fill="#90e058" opacity=".7"/>
<path d="M145 77 L205 0 L213 0 L155 77Z" fill="#c8f8a0" opacity=".7"/>
<path d="M185 70 L225 0 L230 0 L192 72Z" fill="#a8f8f0" opacity=".8"/>
</g></svg>
</div>
<!-- notes/status/scroll -->
<div class="a" style="left:1750px;top:0;width:7px;height:918px;background:linear-gradient(#f6eef2,#eef2ee)"></div>
<div class="a" style="left:1726px;top:94px;width:19px;height:747px;background:#e4e2e7"></div>
<svg class="a" style="left:1730px;top:103px" width="8" height="6" viewBox="0 0 8 6"><path d="M0 5L4 1L8 5Z" fill="#888"/></svg>
<div class="a" style="left:1727px;top:200px;width:14px;height:43px;border-radius:7px;background:#fbfafc;border:1px solid #c8c6cc"></div>
<svg class="a" style="left:1730px;top:774px" width="8" height="6" viewBox="0 0 8 6"><path d="M0 1L4 5L8 1Z" fill="#888"/></svg>
<svg class="a" style="left:1730px;top:789px" width="8" height="10" viewBox="0 0 8 10"><path d="M0 5L4 1L8 5ZM0 9L4 5L8 9Z" fill="#888"/></svg>
<svg class="a" style="left:1730px;top:808px" width="8" height="10" viewBox="0 0 8 10"><path d="M0 1L4 5L8 1ZM0 5L4 9L8 5Z" fill="#888"/></svg>
<div class="a" style="left:435px;top:840px;width:1313px;height:1px;background:#dddbe0"></div>
<svg class="a" style="left:442px;top:846px" width="19" height="18" viewBox="0 0 19 18"><path d="M2 2H17V13H7L3 16.5V13H2Z" fill="none" stroke="#777" stroke-width="1.4"/><path d="M5.5 6H13.5M5.5 9H11" stroke="#777" stroke-width="1.2"/></svg>
<div class="t" style="left:469px;top:849px;color:#6a6a6e;font-size:13px">单击此处添加备注</div>
<div class="t" style="left:165px;top:885px;color:#7a7a7e;letter-spacing:0.6px">幻灯片 5 / 31</div>
<div class="a" style="left:251px;top:879px;width:1px;height:24px;background:#e2e0e5"></div>
<div class="a" style="left:338px;top:879px;width:1px;height:24px;background:#e2e0e5"></div>
<div class="a" style="left:446px;top:879px;width:1px;height:24px;background:#e2e0e5"></div>
<div class="t" style="left:263px;top:885px;color:#7a7a7e;letter-spacing:0.7px">Office 主题</div>
<svg class="a" style="left:357px;top:884px" width="14" height="15" viewBox="0 0 14 15"><path d="M1 2H9M5 2V13" stroke="#777" stroke-width="1.6"/><path d="M8 8H13M10.5 8V14" stroke="#777" stroke-width="1.3"/></svg>
<div class="t" style="left:378px;top:885px;color:#7a7a7e;letter-spacing:0.3px">缺失字体</div>
<svg class="a" style="left:1038px;top:882px" width="18" height="19" viewBox="0 0 18 19"><path d="M9 1.5L16 5.5V13.5L9 17.5L2 13.5V5.5Z" fill="none" stroke="#888" stroke-width="1.4"/><path d="M2 5.5L9 9.5L16 5.5M9 9.5V17.5" fill="none" stroke="#888" stroke-width="1.2"/></svg>
<div class="t" style="left:1062px;top:885px;color:#7a7a7e;font-size:11.5px">一键美化</div>
<svg class="a" style="left:1116px;top:889px" width="6" height="4" viewBox="0 0 6 4"><path d="M0 4L3 0L6 4Z" fill="#888"/></svg>
<svg class="a" style="left:1322px;top:883px" width="18" height="16" viewBox="0 0 18 16"><path d="M1 2H14M1 5.5H14M1 9H14M1 12.5H8" stroke="#8a8a8e" stroke-width="1.6"/><path d="M10 11H16L13 15Z" fill="#444"/></svg>
<svg class="a" style="left:1343px;top:889px" width="5" height="4" viewBox="0 0 5 4"><path d="M0 0H5L2.5 3Z" fill="#999"/></svg>
<div class="a" style="left:1354px;top:879px;width:23px;height:23px;border-radius:3px;background:#cac8cd"></div>
<svg class="a" style="left:1357px;top:883px" width="17" height="15" viewBox="0 0 17 15"><rect x="1" y="1" width="15" height="13" rx="1" fill="none" stroke="#777" stroke-width="1.5"/><path d="M5 1V14M5 10H16" stroke="#777" stroke-width="1.2"/></svg>
<svg class="a" style="left:1383px;top:883px" width="19" height="16" viewBox="0 0 19 16"><rect x="1.5" y="1.5" width="6.5" height="5" rx="1.5" fill="none" stroke="#888" stroke-width="1.4"/><rect x="11" y="1.5" width="6.5" height="5" rx="1.5" fill="none" stroke="#888" stroke-width="1.4"/><rect x="1.5" y="9.5" width="6.5" height="5" rx="1.5" fill="none" stroke="#888" stroke-width="1.4"/><rect x="11" y="9.5" width="6.5" height="5" rx="1.5" fill="none" stroke="#888" stroke-width="1.4"/></svg>
<svg class="a" style="left:1410px;top:883px" width="17" height="16" viewBox="0 0 17 16"><rect x="1.5" y="1.5" width="14" height="13" rx="1.5" fill="none" stroke="#888" stroke-width="1.4"/><path d="M8.5 1.5V14.5" stroke="#888" stroke-width="1.4"/></svg>
<div class="a" style="left:1447px;top:879px;width:32px;height:23px;border-radius:3px;background:#f06a4a"></div>
<svg class="a" style="left:1457px;top:883px" width="12" height="15" viewBox="0 0 12 15"><path d="M1 1L11 7.5L1 14Z" fill="#fff"/></svg>
<svg class="a" style="left:1485px;top:889px" width="5" height="4" viewBox="0 0 5 4"><path d="M0 0H5L2.5 3Z" fill="#999"/></svg>
<div class="t" style="left:1508px;top:885px;color:#9a9a9e;font-size:12px">95%</div>
<svg class="a" style="left:1538px;top:889px" width="5" height="4" viewBox="0 0 5 4"><path d="M0 0H5L2.5 3Z" fill="#999"/></svg>
<div class="a" style="left:1555px;top:890px;width:13px;height:2px;background:#555"></div>
<div class="a" style="left:1580px;top:890px;width:160px;height:1px;background:#aaa"></div>
<div class="a" style="left:1640px;top:884px;width:13px;height:13px;border-radius:50%;border:1.5px solid #888;background:#f4f2f6"></div>
<svg class="a" style="left:1731px;top:883px" width="14" height="14" viewBox="0 0 14 14"><path d="M7 1V13M1 7H13" stroke="#555" stroke-width="1.8"/></svg>
<div class="t" style="left:1608px;top:872px;font-size:21px;color:rgba(120,120,125,.55)">激活 Windows</div>
<div class="t" style="left:1467px;top:895px;font-size:23px;color:rgba(120,120,125,.22)">激活 Windows <span style="font-size:19px">转到"设置"以激活 W</span></div>
<div class="t" style="left:1467px;top:922px;font-size:16px;color:rgba(190,220,235,.22)">转到"设置"以激活 Windows。</div>
<div class="a" style="left:1747px;top:0;width:3px;height:905px;background:#e89aa0"></div>
<div class="a" style="left:1748px;top:902px;width:4px;height:24px;background:#c8202a"></div>
<div class="a" style="left:1727px;top:922px;width:25px;height:4px;background:#c8202a"></div>
<!-- video controls -->
<div class="a" style="left:0;top:955px;width:137px;height:40px;background:linear-gradient(rgba(0,0,0,0),rgba(0,40,10,.3))"></div>
<svg class="a" style="left:0;top:959px" width="14" height="20" viewBox="0 0 14 20"><path d="M0 0 L12.5 9.5 L0 19Z" fill="#fff"/></svg>
<div class="t" style="left:40px;top:959px;font-size:16px;color:#eafbe8">00:02:37</div>
<div class="a" style="left:118px;top:966px;width:1538px;height:5px;border-radius:3px;background:rgba(235,240,220,.45)"></div>
<div class="a" style="left:118px;top:966px;width:46px;height:5px;border-radius:3px;background:#1a9cf0"></div>
<div class="a" style="left:156px;top:959px;width:17px;height:17px;border-radius:50%;background:#fff"></div>
<div class="t" style="left:1666px;top:959px;font-size:16px;color:#fff">01:43:06</div>
<div class="t" style="left:1748px;top:959px;font-size:16px;color:#fff">画</div>
<div class="a" style="left:1623px;top:943px;width:140px;height:60px;border:2px solid #d8323e"></div>
</body></html>
